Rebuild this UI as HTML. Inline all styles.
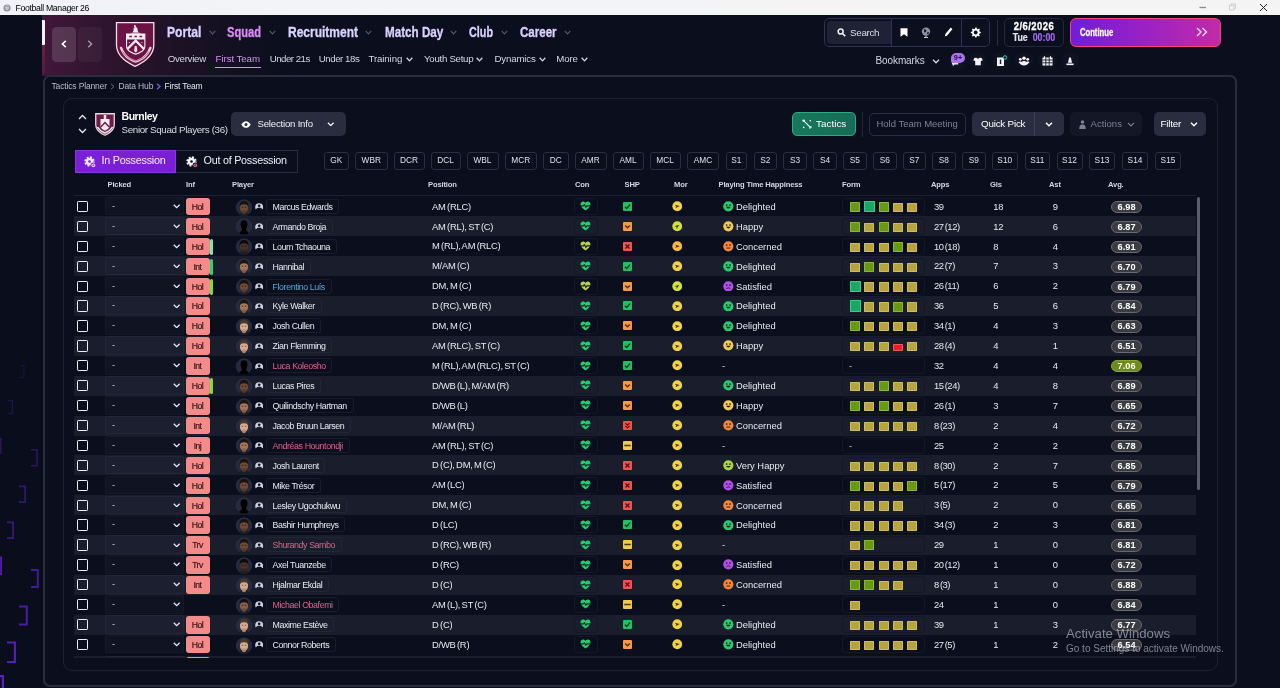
<!DOCTYPE html>
<html lang="en"><head><meta charset="utf-8"><title>Football Manager 26</title>
<style>
*{box-sizing:border-box;margin:0;padding:0}
html,body{width:1280px;height:688px;overflow:hidden;background:#0a0e1d;-webkit-font-smoothing:antialiased;font-family:"Liberation Sans",sans-serif;color:#e8e9ee}
.abs{position:absolute}
#wrap{position:absolute;left:0;top:0;width:1280px;height:688px;will-change:transform;transform:translateZ(0)}
#titlebar{position:absolute;left:0;top:0;width:1280px;height:15px;background:linear-gradient(90deg,#f0f2f7 0,#f3f4f7 400px,#f4f4f4 900px)}
#titlebar .t{position:absolute;left:15.5px;top:2.600px;font-size:8.7px;letter-spacing:-.32px;color:#000;line-height:11px}
#hdr{position:absolute;left:42px;top:15px;width:1238px;height:61px;background:linear-gradient(90deg,#41173a 0px,#341531 45px,#29132b 85px,#1a1125 150px,#0e0f1f 215px,#0a0e1d 260px)}
#sidebar{position:absolute;left:0;top:15px;width:42px;height:673px;background:#0a0d1b}
.navbtn{position:absolute;top:27px;width:23.5px;height:34.5px;border-radius:4.5px}
.mn{position:absolute;top:20.7px;font-weight:bold;font-size:15.4px;line-height:22px;transform-origin:0 50%;white-space:nowrap;-webkit-text-stroke:.35px currentColor}
.sn{position:absolute;top:52px;font-size:9.7px;line-height:14px;white-space:nowrap}
#panel{position:absolute;left:43px;top:74.7px;width:1194.2px;height:612.3px;border:2px solid #292d3e;border-radius:7px;background:#0a0e1d}
#inner{position:absolute;left:62.5px;top:98px;width:1155px;height:573px;border:1px solid #1d2132;border-radius:9px;background:#0a0e1d}
.bc{position:absolute;top:80px;font-size:8.5px;line-height:12px;color:#b9bccb;white-space:nowrap;letter-spacing:-.15px}
.btn{position:absolute;border-radius:5px;font-size:9.5px;white-space:nowrap}
.pbtn{position:absolute;top:152px;height:18px;border:1px solid #2a2e42;border-radius:3px;font-size:8.3px;line-height:15px;text-align:center;color:#dfe1ea}
.th{position:absolute;top:179px;font-size:7.6px;font-weight:bold;line-height:11px;color:#d4d6e0;white-space:nowrap;letter-spacing:-.15px}
#tbl{position:absolute;left:74px;top:0;width:1122px;height:657.5px;overflow:hidden}
.row{position:absolute;left:0;width:1122px;height:20px;font-size:9.4px;line-height:20px;white-space:nowrap}
.row.alt{background:#191d2c}
.row>*{position:absolute;margin-top:-.6px}
.cb{left:3px;top:5px;width:11.3px;height:11.3px;border:1.7px solid #eeeff4;border-radius:1.2px}
.pick{left:31px;top:1px;width:79px;height:18.5px;background:rgba(20,23,38,.55);border-radius:2px;border:1px solid rgba(255,255,255,.03)}
.row.alt .pick{background:rgba(30,34,50,.6)}
.pick>*{position:absolute}
.pd{left:6px;top:-2px;color:#c9ccd8}
.chev{left:67.2px;top:6.2px}
.inf{left:112px;top:2px;width:23.7px;height:17.5px;border-radius:3px;background:#f48b8b;color:#351616;font-size:8.6px;line-height:19px;text-align:center;letter-spacing:-.5px;text-indent:-.8px;-webkit-text-stroke:.2px #351616}
.ibar{left:135.8px;top:3px;width:3px;height:16px;border-radius:1.5px}
.av{left:161.6px;top:2.6px}
.pico{left:180.8px;top:7.4px}
.row.alt .pname{border-color:#222637}
.pname{left:192.3px;top:3px;height:15px;line-height:14px;padding:0 5.8px 0 5.3px;font-size:8.85px;letter-spacing:-.42px;border:1px solid #181c2c;border-radius:3px}
.pos{left:358px;top:.7px;color:#e8e9ee;letter-spacing:-.24px;word-spacing:-.9px}
.conbox{left:500px;top:2px;width:24px;height:17px;border:1px solid #13172a;border-radius:3px}
.conbox svg{position:absolute;left:4.8px;top:2.4px}
.shp{left:549px;top:6px;width:9px;height:9px;border-radius:1px}
.shp svg{position:absolute;left:0;top:0;width:9px;height:9px}
.mor{left:597.7px;top:5.3px}
.face{left:649px;top:5.2px}
.hap{left:662px;top:1px}
.formbox{left:768px;top:2px;width:83px;height:17px;border:1px solid #131728;border-radius:3px}
.formbox i{position:absolute;top:3.2px;width:10px;height:10px;border-radius:1px}
.formbox .dash{position:absolute;left:6px;top:-2px;color:#c9ccd8}
.apps{left:860px;top:.8px;letter-spacing:-.42px;word-spacing:-1.1px}.gls{left:919.3px;top:.8px;letter-spacing:-.25px}.ast{left:978.7px;top:.8px}
.avg{left:1037px;top:5px;height:12.3px;padding:0 5.6px;border-radius:7px;background:#3a3c42;border:1px solid #686a70;font-weight:bold;font-size:9.2px;line-height:10.3px;text-align:center;color:#fff;letter-spacing:.05px}
.avg.hi{background:#6d8a1e;border-color:#8aa832}
</style></head>
<body><div id="wrap">
<div id="titlebar"><span class="t">Football Manager 26</span>
<svg class="abs" style="left:2.500px;top:3.500px" width="8" height="8" viewBox="0 0 8 8"><circle cx="4" cy="4" r="3.600" fill="#8e8e9c"/><path d="M4 1.200 L5.800 3 L5 5.600 H3 L2.200 3 Z" fill="none" stroke="#e4e4ea" stroke-width=".7"/><circle cx="4" cy="3.800" r=".9" fill="#e9e9ee"/></svg>
<svg class="abs" style="left:1196px;top:0" width="84" height="15" viewBox="0 0 84 15"><path d="M3.500 7.500 H10" stroke="#8a8a8a" stroke-width="1.300"/><path d="M33.500 5.500 h4.500 v4.500 h-4.500 z M35 5.500 v-1.500 h4.500 v4.500 h-1.500" fill="none" stroke="#cfcfcf" stroke-width="1"/><path d="M64 4 L71 11 M71 4 L64 11" stroke="#222" stroke-width="1"/></svg>
</div>
<div id="sidebar"></div>
<div id="hdr"></div>
<div class="abs" style="left:42px;top:20px;width:3px;height:25px;background:#f4f0f6;border-radius:0 1px 1px 0"></div>
<div class="abs" style="left:42px;top:45px;width:3px;height:29px;background:linear-gradient(180deg,#6a2046,#561a3e)"></div>
<div class="navbtn" style="left:52px;background:rgba(255,255,255,.14)"><svg class="abs" style="left:9px;top:13px" width="6" height="8" viewBox="0 0 6 8"><path d="M4.800 .8 L1.400 4 L4.800 7.200" fill="none" stroke="#fff" stroke-width="1.600"/></svg></div>
<div class="navbtn" style="left:78px;background:rgba(255,255,255,.045)"><svg class="abs" style="left:8.500px;top:13px" width="6" height="8" viewBox="0 0 6 8"><path d="M1.200 .8 L4.600 4 L1.200 7.200" fill="none" stroke="#a898b2" stroke-width="1.400"/></svg></div>
<svg class="abs" style="left:108px;top:16px" width="56" height="56" viewBox="0 0 56 56">
<path d="M8.500 6.700 H45.800 V29 C45.800 39.500 36.500 46 27.150 50.300 C17.800 46 8.500 39.500 8.500 29 Z" fill="#6c1244" stroke="#f6dfe9" stroke-width="1.300"/>
<path d="M12 32.500 C11 30.800 13.800 30 14.500 32 C17 39 22 42.500 27.700 44.200 C33.400 42.500 38.400 39 40.900 32 C41.600 30 44.400 30.800 43.400 32.500 C40.500 40.500 34.500 44.800 27.700 46.800 C20.900 44.800 14.900 40.500 12 32.500 Z" fill="#e9cfdb"/>
<path d="M14.500 35.500 C17.500 40.500 22 43.300 27.700 45 C33.400 43.300 37.900 40.500 40.900 35.500" fill="none" stroke="#8a3c66" stroke-width=".7"/>
<path d="M18 17.500 H37.400 V30 C37.400 34.800 32.500 37.300 27.700 38.800 C22.900 37.300 18 34.800 18 30 Z" fill="#f7edf2"/>
<path d="M19.100 23.400 H36.300 V30 C36.300 33.900 32 36.200 27.700 37.500 C23.400 36.200 19.100 33.900 19.100 30 Z" fill="#6c1244"/>
<path d="M19.400 33 L27.700 24.600 L36 33" fill="none" stroke="#f7edf2" stroke-width="2.300"/>
<path d="M26.600 30.500 C27 29.500 28.400 29.500 28.800 30.500 L29.300 34.500 L28.300 36.300 H27.100 L26.100 34.500 Z" fill="#f0dbe5"/>
<path d="M21.300 20.500 h2.600 M26.500 20.500 h2.400 M31.500 20.500 h2.600" stroke="#6c1244" stroke-width="1.300"/>
<path d="M21.500 26.500 h.1 M33.900 26.500 h.1" stroke="#f0dbe5" stroke-width="1" stroke-linecap="round"/>
<path d="M26.400 9 C27.600 8.600 28.200 9.600 27.700 10.600 C29.300 11.800 30 13.300 29.600 14.800 L30.600 16.300 H24.600 L25.600 14.600 C25.200 13.300 25.600 12 26.600 11.200 C26 10.500 25.900 9.600 26.400 9 Z" fill="#f7edf2"/>
<path d="M22 17.500 C23.500 16 31.900 16 33.400 17.500 Z" fill="#f7edf2"/>
</svg>
<span class="mn" style="left:167.2px;color:#dad1ff;transform:scaleX(0.788)">Portal</span><svg class="abs" style="left:208.6px;top:29.8px" width="7" height="5" viewBox="0 0 7 5"><path d="M.7 .8 L3.5 3.9 L6.3 .8" fill="none" stroke="#59546c" stroke-width="1.2"/></svg><span class="mn" style="left:227.4px;color:#db8af8;transform:scaleX(0.723)">Squad</span><svg class="abs" style="left:269.3px;top:29.8px" width="7" height="5" viewBox="0 0 7 5"><path d="M.7 .8 L3.5 3.9 L6.3 .8" fill="none" stroke="#59546c" stroke-width="1.2"/></svg><span class="mn" style="left:288.0px;color:#dad1ff;transform:scaleX(0.779)">Recruitment</span><svg class="abs" style="left:365.4px;top:29.8px" width="7" height="5" viewBox="0 0 7 5"><path d="M.7 .8 L3.5 3.9 L6.3 .8" fill="none" stroke="#59546c" stroke-width="1.2"/></svg><span class="mn" style="left:384.5px;color:#dad1ff;transform:scaleX(0.758)">Match Day</span><svg class="abs" style="left:449.8px;top:29.8px" width="7" height="5" viewBox="0 0 7 5"><path d="M.7 .8 L3.5 3.9 L6.3 .8" fill="none" stroke="#59546c" stroke-width="1.2"/></svg><span class="mn" style="left:468.7px;color:#dad1ff;transform:scaleX(0.702)">Club</span><svg class="abs" style="left:500.5px;top:29.8px" width="7" height="5" viewBox="0 0 7 5"><path d="M.7 .8 L3.5 3.9 L6.3 .8" fill="none" stroke="#59546c" stroke-width="1.2"/></svg><span class="mn" style="left:519.7px;color:#dad1ff;transform:scaleX(0.750)">Career</span><svg class="abs" style="left:563.7px;top:29.8px" width="7" height="5" viewBox="0 0 7 5"><path d="M.7 .8 L3.5 3.9 L6.3 .8" fill="none" stroke="#59546c" stroke-width="1.2"/></svg><span class="sn" style="left:167.7px;color:#d5d7e4;letter-spacing:-0.27px">Overview</span><span class="sn" style="left:215.6px;color:#db8af8;letter-spacing:-0.07px">First Team</span><span class="sn" style="left:269.7px;color:#d5d7e4;letter-spacing:-0.51px">Under 21s</span><span class="sn" style="left:318.8px;color:#d5d7e4;letter-spacing:-0.46px">Under 18s</span><span class="sn" style="left:368.5px;color:#d5d7e4;letter-spacing:-0.12px">Training</span><svg class="abs" style="left:405.9px;top:57.4px" width="7" height="5" viewBox="0 0 7 5"><path d="M.7 .8 L3.5 3.9 L6.3 .8" fill="none" stroke="#d5d7e4" stroke-width="1.3"/></svg><span class="sn" style="left:424.0px;color:#d5d7e4;letter-spacing:-0.29px">Youth Setup</span><svg class="abs" style="left:476.4px;top:57.4px" width="7" height="5" viewBox="0 0 7 5"><path d="M.7 .8 L3.5 3.9 L6.3 .8" fill="none" stroke="#d5d7e4" stroke-width="1.3"/></svg><span class="sn" style="left:494.5px;color:#d5d7e4;letter-spacing:-0.17px">Dynamics</span><svg class="abs" style="left:538.6px;top:57.4px" width="7" height="5" viewBox="0 0 7 5"><path d="M.7 .8 L3.5 3.9 L6.3 .8" fill="none" stroke="#d5d7e4" stroke-width="1.3"/></svg><span class="sn" style="left:556.3px;color:#d5d7e4;letter-spacing:-0.15px">More</span><svg class="abs" style="left:581.3px;top:57.4px" width="7" height="5" viewBox="0 0 7 5"><path d="M.7 .8 L3.5 3.9 L6.3 .8" fill="none" stroke="#d5d7e4" stroke-width="1.3"/></svg>
<div class="abs" style="left:215px;top:66.600px;width:45.500px;height:1.200px;background:#db8af8"></div>
<!-- search group -->
<div class="abs" style="left:824px;top:18px;width:166px;height:29px;border:1.800px solid #332e5a;border-radius:5px;background:#0c0f1e"></div>
<div class="abs" style="left:827px;top:21px;width:64px;height:23px;border-radius:4px 0 0 4px;background:#1f2235"></div>
<svg class="abs" style="left:837px;top:28px" width="9" height="9" viewBox="0 0 9 9"><circle cx="3.600" cy="3.600" r="2.500" fill="none" stroke="#f0f0f5" stroke-width="1.500"/><path d="M5.500 5.500 L8.200 8.200" stroke="#f0f0f5" stroke-width="1.700"/></svg>
<span class="abs" style="left:850px;top:27px;font-size:9.800px;line-height:12px;color:#dcdde6;letter-spacing:-.3px">Search</span>
<div class="abs" style="left:891px;top:19px;width:1.200px;height:27px;background:#332e5a"></div>
<div class="abs" style="left:961px;top:19px;width:1.200px;height:27px;background:#332e5a"></div>
<svg class="abs" style="left:900px;top:28px" width="8" height="9" viewBox="0 0 8 9"><path d="M.5 .3 H7.500 V8.700 L4 6.300 L.5 8.700 Z" fill="#fff"/></svg>
<svg class="abs" style="left:921px;top:27px" width="10" height="11" viewBox="0 0 10 11"><circle cx="5" cy="4.600" r="4.200" fill="#8f92a3"/><path d="M3 2 L5.500 3 L5 5 L3 5.500 Z M6 5.500 L8 5 L7.500 7.500 L6 7 Z" fill="#1a1d2c"/><path d="M5 8.800 V10.500 M3 10.500 H7" stroke="#c8c9d4" stroke-width="1"/></svg>
<svg class="abs" style="left:944px;top:27px" width="9" height="10" viewBox="0 0 9 10"><path d="M6.800 .6 L8.400 2.200 L3.200 8.400 L.8 9.400 L1.500 6.800 Z" fill="#fff"/></svg>
<svg class="abs" style="left:970px;top:27px" width="11" height="11" viewBox="0 0 11 11"><path d="M5.500 .3 L6.500 .4 L6.900 1.800 L7.800 2.200 L9.100 1.500 L9.900 2.400 L9.200 3.700 L9.500 4.600 L10.800 5 L10.800 6.100 L9.500 6.500 L9.100 7.400 L9.800 8.700 L9 9.500 L7.700 8.800 L6.800 9.200 L6.400 10.600 L5.300 10.600 L4.900 9.200 L4 8.800 L2.700 9.500 L1.900 8.700 L2.600 7.400 L2.200 6.500 L.8 6.100 L.8 5 L2.200 4.600 L2.600 3.700 L1.900 2.400 L2.700 1.600 L4 2.300 L4.900 1.900 Z" fill="#fff"/><circle cx="5.700" cy="5.500" r="1.900" fill="#0d1020"/></svg>
<div class="abs" style="left:996.500px;top:20px;width:1.500px;height:26px;background:#2a2d3f"></div>
<!-- date -->
<div class="abs" style="left:1004px;top:18px;width:60px;height:29px;border:1.800px solid #25283a;border-radius:5px"></div>
<span class="abs" style="left:1004px;top:19.500px;width:60px;text-align:center;font-weight:bold;font-size:10.500px;line-height:13px;color:#fff;transform:scaleX(.9);letter-spacing:.5px;-webkit-text-stroke:.3px #fff">2/6/2026</span>
<span class="abs" style="left:1004px;top:31px;width:60px;text-align:center;font-weight:bold;font-size:10.500px;line-height:13px;color:#e4e4ee;transform:scaleX(.84);white-space:pre;-webkit-text-stroke:.2px currentColor">Tue  <span style="color:#a26bf2">00:00</span></span>
<!-- continue -->
<div class="abs" style="left:1070px;top:18px;width:151px;height:29px;border:1.500px solid #f2447c;border-radius:6px;background:linear-gradient(90deg,#6f1ddc 0%,#9a22c4 50%,#c42aa8 100%)"></div>
<span class="abs" style="left:1080px;top:25px;font-weight:bold;font-size:11.500px;line-height:14px;color:#fff;transform-origin:0 50%;transform:scaleX(.665);-webkit-text-stroke:.3px #fff">Continue</span>
<svg class="abs" style="left:1196px;top:27px" width="12" height="10" viewBox="0 0 12 10"><path d="M1 1 L5 5 L1 9 M6.500 1 L10.500 5 L6.500 9" fill="none" stroke="#f4dff4" stroke-width="1.400"/></svg>
<!-- bookmarks row -->
<span class="abs" style="left:875.500px;top:54px;font-size:10px;line-height:13px;color:#d5d7e4;letter-spacing:-.1px">Bookmarks</span>
<svg class="abs" style="left:932px;top:58.500px" width="8" height="5" viewBox="0 0 8 5"><path d="M1 .8 L4 3.800 L7 .8" fill="none" stroke="#d5d7e4" stroke-width="1.300"/></svg>
<div class="abs" style="left:949px;top:52px;width:18px;height:18px;border-radius:9px;background:#0f1221"></div>
<div class="abs" style="left:969px;top:52px;width:18px;height:18px;border-radius:9px;background:#0f1221"></div>
<div class="abs" style="left:992px;top:52px;width:18px;height:18px;border-radius:9px;background:#0f1221"></div>
<div class="abs" style="left:1015px;top:52px;width:18px;height:18px;border-radius:9px;background:#0f1221"></div>
<div class="abs" style="left:1038px;top:52px;width:18px;height:18px;border-radius:9px;background:#0f1221"></div>
<div class="abs" style="left:1061px;top:52px;width:18px;height:18px;border-radius:9px;background:#0f1221"></div>
<svg class="abs" style="left:950.500px;top:58.500px" width="10" height="9" viewBox="0 0 11 10"><path d="M1 1 H8 V6 H4 L2 8 V6 H1 Z" fill="#e9e9f2"/></svg>
<div class="abs" style="left:951px;top:52.800px;width:14px;height:10px;border-radius:5px 5px 5px 2px;background:#a874ee"></div>
<span class="abs" style="left:951px;top:52.800px;width:14px;text-align:center;font-size:7.300px;font-weight:bold;line-height:10px;color:#2a0c52">9+</span>
<svg class="abs" style="left:973.200px;top:56.800px" width="10" height="8.800" viewBox="0 0 11 10"><path d="M3.500 .5 L1 1.500 L.2 4 L2.300 4.600 V9.500 H8.700 V4.600 L10.800 4 L10 1.500 L7.500 .5 C7 2 4 2 3.500 .5 Z" fill="#f2f2f7"/></svg>
<svg class="abs" style="left:996px;top:54.500px" width="12" height="12" viewBox="0 0 12 12"><path d="M1 2.500 H8 V11 H1 Z" fill="#f2f2f7"/><path d="M4.500 4.500 V9" stroke="#171a2a" stroke-width="1.400"/><circle cx="9" cy="2.500" r="1.800" fill="#171a2a" stroke="#27c2b0" stroke-width="1"/></svg>
<svg class="abs" style="left:1018px;top:56px" width="12" height="10" viewBox="0 0 12 10"><circle cx="6" cy="2.300" r="1.800" fill="#f2f2f7"/><circle cx="2.300" cy="3.300" r="1.400" fill="#f2f2f7"/><circle cx="9.700" cy="3.300" r="1.400" fill="#f2f2f7"/><path d="M.5 6 C2 8.500 4 9.500 6 9.500 C8 9.500 10 8.500 11.500 6 L9.500 5.200 C8.500 6.500 7 5 6 5 C5 5 3.500 6.500 2.500 5.200 Z" fill="#f2f2f7"/></svg>
<svg class="abs" style="left:1042px;top:56px" width="11" height="10" viewBox="0 0 11 10"><path d="M.5 1.500 H10.500 V9.500 H.5 Z" fill="#f2f2f7"/><path d="M.5 4 H10.500 M.5 6.800 H10.500 M3.800 1.500 V9.500 M7.200 1.500 V9.500" stroke="#171a2a" stroke-width=".9"/><path d="M2.500 .3 V2.200 M8.500 .3 V2.200" stroke="#f2f2f7" stroke-width="1.200"/></svg>
<svg class="abs" style="left:1066px;top:56.500px" width="8" height="9" viewBox="0 0 10 11"><path d="M4 .5 H6 L7.600 7 H2.400 Z" fill="#f2f2f7"/><path d="M.5 8 H9.500 V10 H.5 Z" fill="#f2f2f7"/></svg>

<div id="panel"></div>
<div id="inner"></div>
<!-- breadcrumb -->
<span class="bc" style="left:51.500px">Tactics Planner</span>
<svg class="abs" style="left:110px;top:83px" width="5" height="7" viewBox="0 0 5 7"><path d="M1 .8 L4 3.500 L1 6.200" fill="none" stroke="#6a6e82" stroke-width="1"/></svg>
<span class="bc" style="left:118.500px">Data Hub</span>
<svg class="abs" style="left:156px;top:83px" width="5" height="7" viewBox="0 0 5 7"><path d="M1 .8 L4 3.500 L1 6.200" fill="none" stroke="#8a55e8" stroke-width="1.300"/></svg>
<span class="bc" style="left:164.500px;color:#e6e7ee">First Team</span>
<!-- team heading -->
<svg class="abs" style="left:78px;top:114px" width="9" height="6" viewBox="0 0 9 6"><path d="M1 5 L4.500 1.500 L8 5" fill="none" stroke="#e8e9ee" stroke-width="1.300"/></svg>
<svg class="abs" style="left:78px;top:127.500px" width="9" height="6" viewBox="0 0 9 6"><path d="M1 1 L4.500 4.500 L8 1" fill="none" stroke="#e8e9ee" stroke-width="1.300"/></svg>
<svg class="abs" style="left:95px;top:112.500px" width="20" height="23" viewBox="0 0 40 46">
<path d="M1.500 1.500 H38.500 V24 C38.500 33 30 40 20 44.500 C10 40 1.500 33 1.500 24 Z" fill="#6c1d45" stroke="#e9d9e1" stroke-width="2.600"/>
<path d="M11 12 H29 V26 C29 30 25 33.500 20 35.500 C15 33.500 11 30 11 26 Z" fill="#f3e9ee"/>
<path d="M11.500 28 L20 19 L28.500 28" fill="none" stroke="#6c1d45" stroke-width="3"/>
<path d="M17.500 4 h5 v8 h-5 z" fill="#f3e9ee"/>
<path d="M5 28 C9 35 14 38 20 40 C26 38 31 35 35 28" fill="none" stroke="#f3e9ee" stroke-width="3"/>
</svg>
<span class="abs" style="left:121.500px;top:109.800px;font-size:10.500px;font-weight:bold;line-height:13px;color:#fff;letter-spacing:-.45px">Burnley</span>
<span class="abs" style="left:121.500px;top:122.800px;font-size:9.800px;line-height:13px;color:#dcdde6;letter-spacing:-.35px;white-space:nowrap">Senior Squad Players (36)</span>
<div class="btn" style="left:230.500px;top:112px;width:115.500px;height:24px;background:#2a2d40"></div>
<svg class="abs" style="left:241px;top:121px" width="10" height="7" viewBox="0 0 10 7"><path d="M.3 3.500 C2 .8 3.500 .2 5 .2 C6.500 .2 8 .8 9.700 3.500 C8 6.200 6.500 6.800 5 6.800 C3.500 6.800 2 6.200 .3 3.500 Z" fill="#fff"/><circle cx="5" cy="3.500" r="1.500" fill="#2a2d40"/></svg>
<span class="abs" style="left:257.500px;top:118px;font-size:9.600px;line-height:12px;color:#eeeef4;letter-spacing:-.2px;white-space:nowrap">Selection Info</span>
<svg class="abs" style="left:327px;top:121.700px" width="7.500" height="4.700" viewBox="0 0 8 5"><path d="M1 .8 L4 3.800 L7 .8" fill="none" stroke="#fff" stroke-width="1.300"/></svg>
<!-- right toolbar -->
<div class="btn" style="left:792px;top:112px;width:64px;height:24px;background:linear-gradient(90deg,#15795b,#176c56);border:1px solid #2dab80"></div>
<svg class="abs" style="left:802px;top:119px" width="10" height="10" viewBox="0 0 10 10"><path d="M1.800 1.800 L8.600 8.600" stroke="#fff" stroke-width="1.100"/><circle cx="1.600" cy="1.600" r="1.200" fill="#fff"/><circle cx="8.300" cy="1.700" r=".8" fill="#e8fff6"/><circle cx="1.700" cy="8.300" r=".9" fill="#e8fff6"/><path d="M7 9 L9 9 L9 7" fill="none" stroke="#fff" stroke-width=".9"/></svg>
<span class="abs" style="left:816px;top:118px;font-size:9.800px;line-height:12px;color:#fff;letter-spacing:.05px">Tactics</span>
<div class="abs" style="left:862px;top:112px;width:1px;height:25px;background:#23273a"></div>
<div class="btn" style="left:869px;top:112.500px;width:97px;height:23.500px;border:1px solid #2a2e42"></div>
<span class="abs" style="left:876.500px;top:118px;font-size:9.500px;line-height:12px;color:#7d8194;letter-spacing:-.02px;white-space:nowrap">Hold Team Meeting</span>
<div class="btn" style="left:972px;top:112px;width:91.500px;height:24px;background:#2a2d40"></div>
<div class="abs" style="left:1033.500px;top:112px;width:1px;height:24px;background:#3d4056"></div>
<span class="abs" style="left:981px;top:118px;font-size:9.800px;line-height:12px;color:#fff;letter-spacing:-.2px;white-space:nowrap">Quick Pick</span>
<svg class="abs" style="left:1044.500px;top:122px" width="8" height="5" viewBox="0 0 8 5"><path d="M1 .8 L4 3.800 L7 .8" fill="none" stroke="#fff" stroke-width="1.400"/></svg>
<div class="btn" style="left:1070px;top:112px;width:72px;height:24px;background:#141726"></div>
<svg class="abs" style="left:1078.500px;top:119.500px" width="7" height="9" viewBox="0 0 7 9"><circle cx="3.500" cy="2" r="1.800" fill="#7d8194"/><path d="M.3 9 C.3 5.500 1.500 4.500 3.500 4.500 C5.500 4.500 6.700 5.500 6.700 9 Z" fill="#7d8194"/></svg>
<span class="abs" style="left:1090.500px;top:118px;font-size:9.500px;line-height:12px;color:#7d8194;letter-spacing:.05px">Actions</span>
<svg class="abs" style="left:1126.500px;top:122px" width="8" height="5" viewBox="0 0 8 5"><path d="M1 .8 L4 3.800 L7 .8" fill="none" stroke="#7d8194" stroke-width="1.200"/></svg>
<div class="btn" style="left:1154px;top:112px;width:52px;height:24px;background:#2a2d40"></div>
<span class="abs" style="left:1160.500px;top:118px;font-size:9.800px;line-height:12px;color:#fff;letter-spacing:-.2px">Filter</span>
<svg class="abs" style="left:1190px;top:122px" width="8" height="5" viewBox="0 0 8 5"><path d="M1 .8 L4 3.800 L7 .8" fill="none" stroke="#fff" stroke-width="1.400"/></svg>
<!-- possession tabs -->
<div class="abs" style="left:74.500px;top:150px;width:101px;height:23px;background:#7a1fd6;border:1px solid #8c35e6"></div>
<div class="abs" style="left:175.500px;top:150px;width:122px;height:23px;border:1px solid #2a2e42;border-left:none"></div>
<svg class="abs" style="left:83.500px;top:155.500px" width="12.500" height="12.500" viewBox="0 0 12.500 12.500"><circle cx="5.500" cy="5.500" r="4.300" fill="none" stroke="#f2e9fb" stroke-width="1.800" stroke-dasharray="1.900 1.480"/><circle cx="5.500" cy="5.500" r="3.700" fill="#f2e9fb"/><circle cx="5.500" cy="5.500" r="1.300" fill="#7a1fd6"/><circle cx="9.300" cy="9.300" r="2.700" fill="#7a1fd6"/><circle cx="9.300" cy="9.300" r="1.900" fill="#e9dcf8"/><path d="M8.300 9.300 h2 M9.300 8.300 v2" stroke="#7a1fd6" stroke-width=".6"/></svg>
<span class="abs" style="left:101.500px;top:153px;font-size:10.800px;line-height:14px;color:#f4ecfc;letter-spacing:-.25px;white-space:nowrap">In Possession</span>
<svg class="abs" style="left:185.500px;top:155.500px" width="12.500" height="12.500" viewBox="0 0 12.500 12.500"><circle cx="5.500" cy="5.500" r="4.300" fill="none" stroke="#f2f2f7" stroke-width="1.800" stroke-dasharray="1.900 1.480"/><circle cx="5.500" cy="5.500" r="3.700" fill="#f2f2f7"/><circle cx="5.500" cy="5.500" r="1.300" fill="#0a0e1d"/><circle cx="9.300" cy="9.300" r="2.700" fill="#0a0e1d"/><circle cx="9.300" cy="9.300" r="1.900" fill="#e4707e"/><path d="M8.300 9.300 h2 M9.300 8.300 v2" stroke="#0a0e1d" stroke-width=".6"/></svg>
<span class="abs" style="left:203.500px;top:153px;font-size:10.800px;line-height:14px;color:#eeeef4;letter-spacing:-.25px;white-space:nowrap">Out of Possession</span>
<!-- position buttons -->
<span class="pbtn" style="left:323.500px;width:25.500px">GK</span>
<span class="pbtn" style="left:355px;width:32.500px">WBR</span>
<span class="pbtn" style="left:393.500px;width:31px">DCR</span>
<span class="pbtn" style="left:430.500px;width:30px">DCL</span>
<span class="pbtn" style="left:466.500px;width:32px">WBL</span>
<span class="pbtn" style="left:504.500px;width:32.500px">MCR</span>
<span class="pbtn" style="left:543px;width:25.500px">DC</span>
<span class="pbtn" style="left:574.500px;width:32px">AMR</span>
<span class="pbtn" style="left:612.500px;width:31px">AML</span>
<span class="pbtn" style="left:649.500px;width:31px">MCL</span>
<span class="pbtn" style="left:687px;width:32px">AMC</span>
<span class="pbtn" style="left:725.500px;width:21.500px">S1</span>
<span class="pbtn" style="left:753.500px;width:23.500px">S2</span>
<span class="pbtn" style="left:783px;width:24px">S3</span>
<span class="pbtn" style="left:813px;width:24px">S4</span>
<span class="pbtn" style="left:843px;width:23.500px">S5</span>
<span class="pbtn" style="left:873px;width:23.500px">S6</span>
<span class="pbtn" style="left:902.500px;width:23.500px">S7</span>
<span class="pbtn" style="left:932px;width:23.500px">S8</span>
<span class="pbtn" style="left:962px;width:23.500px">S9</span>
<span class="pbtn" style="left:991.500px;width:26.500px">S10</span>
<span class="pbtn" style="left:1025px;width:24.500px">S11</span>
<span class="pbtn" style="left:1056.500px;width:26px">S12</span>
<span class="pbtn" style="left:1089px;width:26px">S13</span>
<span class="pbtn" style="left:1122px;width:26px">S14</span>
<span class="pbtn" style="left:1155px;width:26px">S15</span>
<!-- table header -->
<span class="th" style="left:107.500px">Picked</span>
<span class="th" style="left:186px">Inf</span>
<span class="th" style="left:232px">Player</span>
<span class="th" style="left:428px">Position</span>
<span class="th" style="left:575px">Con</span>
<span class="th" style="left:624.500px">SHP</span>
<span class="th" style="left:674px">Mor</span>
<span class="th" style="left:718.500px">Playing Time Happiness</span>
<span class="th" style="left:842px">Form</span>
<span class="th" style="left:931px">Apps</span>
<span class="th" style="left:990px">Gls</span>
<span class="th" style="left:1049px">Ast</span>
<span class="th" style="left:1108px">Avg.</span>
<div class="abs" style="left:74px;top:195px;width:1122px;height:1px;background:#1c2031"></div>
<div class="abs" style="left:1197px;top:197px;width:3px;height:293px;border-radius:1.500px;background:#5a5d6c"></div>

<div id="tbl">
<div class="row" style="top:196.50px"><span class="cb"></span><span class="pick"><span class="pd">-</span><svg class="chev" viewBox="0 0 8 5" width="7.4" height="4.6"><path d="M0.8 0.8 L4 4 L7.2 0.8" fill="none" stroke="#e8e9ee" stroke-width="1.4"/></svg></span><span class="inf">Hol</span><svg class="av" viewBox="0 0 16 17" width="16" height="17"><circle cx="8" cy="8.5" r="7.8" fill="#252a3f" stroke="#343a52" stroke-width=".5"/><path d="M3.2 16 C3.6 14.2 5.4 13.6 8 13.6 C10.6 13.6 12.4 14.2 12.8 16 C11.500 16.700 9.800 17 8 17 C6.200 17 4.500 16.700 3.200 16 Z" fill="#1b1d26"/><path d="M6.200 11 H9.800 V14.600 C9 15.400 7 15.400 6.200 14.600 Z" fill="#4e3224"/><ellipse cx="8" cy="8.800" rx="4.100" ry="5.200" fill="#6f4a35"/><path d="M4.300 10.500 C5 13 6.500 14 8 14 C9.500 14 11 13 11.700 10.500 C10.800 12 9.500 12.600 8 12.600 C6.500 12.600 5.200 12 4.300 10.500 Z" fill="#4e3224"/><path d="M3.700 8 C3.300 3.600 5.400 2 8 2 C10.600 2 12.700 3.600 12.300 8 C11.800 5.800 10.600 5.200 8 5.200 C5.400 5.200 4.200 5.800 3.700 8 Z" fill="#17100c"/><path d="M5.700 8.300 h1.500 M8.800 8.300 h1.500" stroke="#17100c" stroke-width=".7"/><path d="M6.800 11.400 Q8 12.100 9.200 11.400" fill="none" stroke="#4e3224" stroke-width=".6"/></svg><svg class="pico" viewBox="0 0 10 8" width="8.400" height="6.700"><path d="M5 .2 A4.800 4.800 0 0 1 9.800 5 C9.800 6.200 9.500 7 9 7.800 C8.400 6.300 7 5.600 5 5.600 C3 5.600 1.600 6.300 1 7.800 C.5 7 .2 6.200 .2 5 A4.800 4.800 0 0 1 5 .2 Z" fill="#cdd0e2"/><circle cx="5" cy="3.400" r="1.600" fill="#141828"/></svg><span class="pname" style="color:#e8e9ee">Marcus Edwards</span><span class="pos">AM (RLC)</span><span class="conbox"><svg viewBox="0 0 14 13" width="11" height="10.2"><path d="M7 12 C3.2 9.2 0.7 6.8 0.7 4 C0.7 2 2.2 0.7 3.9 0.7 C5.2 0.7 6.3 1.4 7 2.5 C7.7 1.4 8.8 0.7 10.1 0.7 C11.8 0.7 13.3 2 13.3 4 C13.3 6.8 10.8 9.2 7 12 Z" fill="#1fd071"/><path d="M1.2 6.2 L4.4 6.2 L5.6 4.6 L7.4 8 L8.8 6.2 L12.8 6.2" fill="none" stroke="#0f2a22" stroke-width="1.5" stroke-linejoin="round"/></svg></span><span class="shp" style="background:#1fc163"><svg viewBox="0 0 10 10"><path d="M2.2 5.3 L4.2 7.2 L7.8 2.9" fill="none" stroke="#0d3a22" stroke-width="1.6"/></svg></span><svg class="mor" viewBox="0 0 12 12" width="10.5" height="10.5"><circle cx="6" cy="6" r="5.6" fill="#efd545"/><path d="M3.500 3.900 L8.900 6 L3.500 8.100 L4.900 6 Z" fill="#4b3208" transform="rotate(-8 6 6)"/></svg><svg class="face" viewBox="0 0 12 12" width="10.7" height="10.7"><circle cx="6" cy="6" r="5.7" fill="#2acb72"/><circle cx="4.100" cy="4.500" r=".95" fill="#2a1a08"/><circle cx="7.900" cy="4.500" r=".95" fill="#2a1a08"/><path d="M3.2 6.4 Q6 10.6 8.8 6.4 Z" fill="#2a1a08"/></svg><span class="hap">Delighted</span><span class="formbox"><i style="left:7.0px;top:3.1px;width:10.2px;height:10.0px;background:#679a12;box-shadow:inset 0 0 0 1px #8db63a"></i><i style="left:20.6px;top:2.0px;width:11.2px;height:11.1px;background:#18a862;box-shadow:inset 0 0 0 1px #42c98c"></i><i style="left:35.7px;top:3.1px;width:10.2px;height:10.0px;background:#679a12;box-shadow:inset 0 0 0 1px #8db63a"></i><i style="left:49.7px;top:3.9px;width:10.2px;height:9.2px;background:#b8a43c;box-shadow:inset 0 0 0 1px #cbbd62"></i><i style="left:63.6px;top:3.9px;width:10.2px;height:9.2px;background:#b8a43c;box-shadow:inset 0 0 0 1px #cbbd62"></i></span><span class="apps">39</span><span class="gls">18</span><span class="ast">9</span><span class="avg ">6.98</span></div>
<div class="row alt" style="top:216.41px"><span class="cb"></span><span class="pick"><span class="pd">-</span><svg class="chev" viewBox="0 0 8 5" width="7.4" height="4.6"><path d="M0.8 0.8 L4 4 L7.2 0.8" fill="none" stroke="#e8e9ee" stroke-width="1.4"/></svg></span><span class="inf">Hol</span><svg class="av" viewBox="0 0 16 17" width="16" height="17"><circle cx="8" cy="8.5" r="7.8" fill="#252a3f" stroke="#343a52" stroke-width=".5"/><path d="M8 2.2 C10.6 2.2 11.6 4.2 11.4 6.6 C11.2 9 10.4 10.6 10 11.6 C10.2 12.8 11.4 13.6 12.8 14.4 L11 16.6 L5 16.6 L3.2 14.4 C4.600 13.6 5.800 12.800 6 11.600 C5.600 10.600 4.800 9 4.600 6.600 C4.400 4.200 5.400 2.200 8 2.200 Z" fill="#020203"/></svg><svg class="pico" viewBox="0 0 10 8" width="8.400" height="6.700"><path d="M5 .2 A4.800 4.800 0 0 1 9.800 5 C9.800 6.200 9.500 7 9 7.800 C8.400 6.300 7 5.600 5 5.600 C3 5.600 1.600 6.300 1 7.800 C.5 7 .2 6.200 .2 5 A4.800 4.800 0 0 1 5 .2 Z" fill="#cdd0e2"/><circle cx="5" cy="3.400" r="1.600" fill="#141828"/></svg><span class="pname" style="color:#e8e9ee">Armando Broja</span><span class="pos">AM (RL), ST (C)</span><span class="conbox"><svg viewBox="0 0 14 13" width="11" height="10.2"><path d="M7 12 C3.2 9.2 0.7 6.8 0.7 4 C0.7 2 2.2 0.7 3.9 0.7 C5.2 0.7 6.3 1.4 7 2.5 C7.7 1.4 8.8 0.7 10.1 0.7 C11.8 0.7 13.3 2 13.3 4 C13.3 6.8 10.8 9.2 7 12 Z" fill="#1fd071"/><path d="M1.2 6.2 L4.4 6.2 L5.6 4.6 L7.4 8 L8.8 6.2 L12.8 6.2" fill="none" stroke="#0f2a22" stroke-width="1.5" stroke-linejoin="round"/></svg></span><span class="shp" style="background:#f79a45"><svg viewBox="0 0 10 10"><path d="M2.4 3.8 L5 6.3 L7.6 3.8" fill="none" stroke="#5a2c08" stroke-width="1.6"/></svg></span><svg class="mor" viewBox="0 0 12 12" width="10.5" height="10.5"><circle cx="6" cy="6" r="5.6" fill="#d2e23a"/><path d="M3.500 3.900 L8.900 6 L3.500 8.100 L4.900 6 Z" fill="#4b3208" transform="rotate(-38 6 6)"/></svg><svg class="face" viewBox="0 0 12 12" width="10.7" height="10.7"><circle cx="6" cy="6" r="5.7" fill="#f2cc55"/><circle cx="4.100" cy="4.500" r=".95" fill="#2a1a08"/><circle cx="7.900" cy="4.500" r=".95" fill="#2a1a08"/><path d="M3.3 6.500 Q6 10.400 8.700 6.500 Z" fill="#2a1a08"/></svg><span class="hap">Happy</span><span class="formbox"><i style="left:7.0px;top:3.1px;width:10.2px;height:10.0px;background:#679a12;box-shadow:inset 0 0 0 1px #8db63a"></i><i style="left:21.1px;top:3.9px;width:10.2px;height:9.2px;background:#b8a43c;box-shadow:inset 0 0 0 1px #cbbd62"></i><i style="left:35.7px;top:3.1px;width:10.2px;height:10.0px;background:#679a12;box-shadow:inset 0 0 0 1px #8db63a"></i><i style="left:49.7px;top:3.9px;width:10.2px;height:9.2px;background:#b8a43c;box-shadow:inset 0 0 0 1px #cbbd62"></i><i style="left:63.6px;top:3.9px;width:10.2px;height:9.2px;background:#b8a43c;box-shadow:inset 0 0 0 1px #cbbd62"></i></span><span class="apps">27 (12)</span><span class="gls">12</span><span class="ast">6</span><span class="avg ">6.87</span></div>
<div class="row" style="top:236.32px"><span class="cb"></span><span class="pick"><span class="pd">-</span><svg class="chev" viewBox="0 0 8 5" width="7.4" height="4.6"><path d="M0.8 0.8 L4 4 L7.2 0.8" fill="none" stroke="#e8e9ee" stroke-width="1.4"/></svg></span><span class="inf">Hol</span><span class="ibar" style="background:#7be6b0"></span><svg class="av" viewBox="0 0 16 17" width="16" height="17"><circle cx="8" cy="8.5" r="7.8" fill="#252a3f" stroke="#343a52" stroke-width=".5"/><path d="M3.2 16 C3.6 14.2 5.4 13.6 8 13.6 C10.6 13.6 12.4 14.2 12.8 16 C11.500 16.700 9.800 17 8 17 C6.200 17 4.500 16.700 3.200 16 Z" fill="#1b1d26"/><path d="M6.200 11 H9.800 V14.600 C9 15.400 7 15.400 6.200 14.600 Z" fill="#2e1e17"/><ellipse cx="8" cy="8.800" rx="4.100" ry="5.200" fill="#4a3226"/><path d="M4.300 10.500 C5 13 6.500 14 8 14 C9.500 14 11 13 11.700 10.500 C10.800 12 9.500 12.600 8 12.600 C6.500 12.600 5.200 12 4.300 10.500 Z" fill="#2e1e17"/><path d="M3.700 8 C3.300 3.600 5.400 2 8 2 C10.600 2 12.700 3.600 12.300 8 C11.800 5.800 10.600 5.200 8 5.200 C5.400 5.200 4.200 5.800 3.700 8 Z" fill="#0d0a08"/><path d="M5.700 8.300 h1.500 M8.800 8.300 h1.500" stroke="#0d0a08" stroke-width=".7"/><path d="M6.800 11.400 Q8 12.100 9.200 11.400" fill="none" stroke="#2e1e17" stroke-width=".6"/></svg><svg class="pico" viewBox="0 0 10 8" width="8.400" height="6.700"><path d="M5 .2 A4.800 4.800 0 0 1 9.800 5 C9.800 6.200 9.500 7 9 7.800 C8.400 6.300 7 5.600 5 5.600 C3 5.600 1.600 6.300 1 7.800 C.5 7 .2 6.200 .2 5 A4.800 4.800 0 0 1 5 .2 Z" fill="#cdd0e2"/><circle cx="5" cy="3.400" r="1.600" fill="#141828"/></svg><span class="pname" style="color:#e8e9ee">Loum Tchaouna</span><span class="pos">M (RL), AM (RLC)</span><span class="conbox"><svg viewBox="0 0 14 13" width="11" height="10.2"><path d="M7 12 C3.2 9.2 0.7 6.8 0.7 4 C0.7 2 2.2 0.7 3.9 0.7 C5.2 0.7 6.3 1.4 7 2.5 C7.7 1.4 8.8 0.7 10.1 0.7 C11.8 0.7 13.3 2 13.3 4 C13.3 6.8 10.8 9.2 7 12 Z" fill="#b9d145"/><path d="M1.2 6.2 L4.4 6.2 L5.6 4.6 L7.4 8 L8.8 6.2 L12.8 6.2" fill="none" stroke="#0f2a22" stroke-width="1.5" stroke-linejoin="round"/></svg></span><span class="shp" style="background:#ec5552"><svg viewBox="0 0 10 10"><path d="M2.8 2.8 L7.2 7.2 M7.2 2.8 L2.8 7.2" fill="none" stroke="#5c1016" stroke-width="1.5"/></svg></span><svg class="mor" viewBox="0 0 12 12" width="10.5" height="10.5"><circle cx="6" cy="6" r="5.6" fill="#f6bb45"/><path d="M3.500 3.900 L8.900 6 L3.500 8.100 L4.900 6 Z" fill="#4b3208" transform="rotate(0 6 6)"/></svg><svg class="face" viewBox="0 0 12 12" width="10.7" height="10.7"><circle cx="6" cy="6" r="5.7" fill="#f5863d"/><circle cx="4.100" cy="4.500" r=".95" fill="#2a1a08"/><circle cx="7.900" cy="4.500" r=".95" fill="#2a1a08"/><path d="M3.9 7.9 L8.1 7.9" fill="none" stroke="#2a1a08" stroke-width="1"/></svg><span class="hap">Concerned</span><span class="formbox"><i style="left:7.0px;top:3.9px;width:10.2px;height:9.2px;background:#b8a43c;box-shadow:inset 0 0 0 1px #cbbd62"></i><i style="left:21.1px;top:3.9px;width:10.2px;height:9.2px;background:#b8a43c;box-shadow:inset 0 0 0 1px #cbbd62"></i><i style="left:35.7px;top:3.9px;width:10.2px;height:9.2px;background:#b8a43c;box-shadow:inset 0 0 0 1px #cbbd62"></i><i style="left:49.7px;top:3.1px;width:10.2px;height:10.0px;background:#679a12;box-shadow:inset 0 0 0 1px #8db63a"></i><i style="left:63.6px;top:3.9px;width:10.2px;height:9.2px;background:#b8a43c;box-shadow:inset 0 0 0 1px #cbbd62"></i></span><span class="apps">10 (18)</span><span class="gls">8</span><span class="ast">4</span><span class="avg ">6.91</span></div>
<div class="row alt" style="top:256.23px"><span class="cb"></span><span class="pick"><span class="pd">-</span><svg class="chev" viewBox="0 0 8 5" width="7.4" height="4.6"><path d="M0.8 0.8 L4 4 L7.2 0.8" fill="none" stroke="#e8e9ee" stroke-width="1.4"/></svg></span><span class="inf">Int</span><span class="ibar" style="background:#2fd36b"></span><svg class="av" viewBox="0 0 16 17" width="16" height="17"><circle cx="8" cy="8.5" r="7.8" fill="#252a3f" stroke="#343a52" stroke-width=".5"/><path d="M3.2 16 C3.6 14.2 5.4 13.6 8 13.6 C10.6 13.6 12.4 14.2 12.8 16 C11.500 16.700 9.800 17 8 17 C6.200 17 4.500 16.700 3.200 16 Z" fill="#1b1d26"/><path d="M6.200 11 H9.800 V14.600 C9 15.400 7 15.400 6.200 14.600 Z" fill="#7d553f"/><ellipse cx="8" cy="8.800" rx="4.100" ry="5.200" fill="#a87658"/><path d="M4.300 10.500 C5 13 6.500 14 8 14 C9.500 14 11 13 11.700 10.500 C10.800 12 9.500 12.600 8 12.600 C6.500 12.600 5.200 12 4.300 10.500 Z" fill="#7d553f"/><path d="M3.700 8 C3.300 3.600 5.400 2 8 2 C10.600 2 12.700 3.600 12.300 8 C11.800 5.800 10.600 5.200 8 5.200 C5.400 5.200 4.200 5.800 3.700 8 Z" fill="#1d140f"/><path d="M5.700 8.300 h1.500 M8.800 8.300 h1.500" stroke="#1d140f" stroke-width=".7"/><path d="M6.800 11.400 Q8 12.100 9.200 11.400" fill="none" stroke="#7d553f" stroke-width=".6"/></svg><svg class="pico" viewBox="0 0 10 8" width="8.400" height="6.700"><path d="M5 .2 A4.800 4.800 0 0 1 9.800 5 C9.800 6.200 9.500 7 9 7.800 C8.400 6.300 7 5.600 5 5.600 C3 5.600 1.600 6.300 1 7.800 C.5 7 .2 6.200 .2 5 A4.800 4.800 0 0 1 5 .2 Z" fill="#cdd0e2"/><circle cx="5" cy="3.400" r="1.600" fill="#141828"/></svg><span class="pname" style="color:#e8e9ee">Hannibal</span><span class="pos">M/AM (C)</span><span class="conbox"><svg viewBox="0 0 14 13" width="11" height="10.2"><path d="M7 12 C3.2 9.2 0.7 6.8 0.7 4 C0.7 2 2.2 0.7 3.9 0.7 C5.2 0.7 6.3 1.4 7 2.5 C7.7 1.4 8.8 0.7 10.1 0.7 C11.8 0.7 13.3 2 13.3 4 C13.3 6.8 10.8 9.2 7 12 Z" fill="#1fd071"/><path d="M1.2 6.2 L4.4 6.2 L5.6 4.6 L7.4 8 L8.8 6.2 L12.8 6.2" fill="none" stroke="#0f2a22" stroke-width="1.5" stroke-linejoin="round"/></svg></span><span class="shp" style="background:#1fc163"><svg viewBox="0 0 10 10"><path d="M2.2 5.3 L4.2 7.2 L7.8 2.9" fill="none" stroke="#0d3a22" stroke-width="1.6"/></svg></span><svg class="mor" viewBox="0 0 12 12" width="10.5" height="10.5"><circle cx="6" cy="6" r="5.6" fill="#efd545"/><path d="M3.500 3.900 L8.900 6 L3.500 8.100 L4.900 6 Z" fill="#4b3208" transform="rotate(-8 6 6)"/></svg><svg class="face" viewBox="0 0 12 12" width="10.7" height="10.7"><circle cx="6" cy="6" r="5.7" fill="#2acb72"/><circle cx="4.100" cy="4.500" r=".95" fill="#2a1a08"/><circle cx="7.900" cy="4.500" r=".95" fill="#2a1a08"/><path d="M3.2 6.4 Q6 10.6 8.8 6.4 Z" fill="#2a1a08"/></svg><span class="hap">Delighted</span><span class="formbox"><i style="left:7.0px;top:3.9px;width:10.2px;height:9.2px;background:#b8a43c;box-shadow:inset 0 0 0 1px #cbbd62"></i><i style="left:21.1px;top:3.1px;width:10.2px;height:10.0px;background:#679a12;box-shadow:inset 0 0 0 1px #8db63a"></i><i style="left:35.7px;top:3.9px;width:10.2px;height:9.2px;background:#b8a43c;box-shadow:inset 0 0 0 1px #cbbd62"></i><i style="left:49.7px;top:3.9px;width:10.2px;height:9.2px;background:#b8a43c;box-shadow:inset 0 0 0 1px #cbbd62"></i><i style="left:63.6px;top:3.9px;width:10.2px;height:9.2px;background:#b8a43c;box-shadow:inset 0 0 0 1px #cbbd62"></i></span><span class="apps">22 (7)</span><span class="gls">7</span><span class="ast">3</span><span class="avg ">6.70</span></div>
<div class="row" style="top:276.14px"><span class="cb"></span><span class="pick"><span class="pd">-</span><svg class="chev" viewBox="0 0 8 5" width="7.4" height="4.6"><path d="M0.8 0.8 L4 4 L7.2 0.8" fill="none" stroke="#e8e9ee" stroke-width="1.4"/></svg></span><span class="inf">Hol</span><span class="ibar" style="background:#7fdc3c"></span><svg class="av" viewBox="0 0 16 17" width="16" height="17"><circle cx="8" cy="8.5" r="7.8" fill="#252a3f" stroke="#343a52" stroke-width=".5"/><path d="M3.2 16 C3.6 14.2 5.4 13.6 8 13.6 C10.6 13.6 12.4 14.2 12.8 16 C11.500 16.700 9.800 17 8 17 C6.200 17 4.500 16.700 3.200 16 Z" fill="#1b1d26"/><path d="M6.200 11 H9.800 V14.600 C9 15.400 7 15.400 6.200 14.600 Z" fill="#4e3224"/><ellipse cx="8" cy="8.800" rx="4.100" ry="5.200" fill="#6f4a35"/><path d="M4.300 10.500 C5 13 6.500 14 8 14 C9.500 14 11 13 11.700 10.500 C10.800 12 9.500 12.600 8 12.600 C6.500 12.600 5.200 12 4.300 10.500 Z" fill="#4e3224"/><path d="M3.700 8 C3.300 3.600 5.400 2 8 2 C10.600 2 12.700 3.600 12.300 8 C11.800 5.800 10.600 5.200 8 5.200 C5.400 5.200 4.200 5.800 3.700 8 Z" fill="#17100c"/><path d="M5.700 8.300 h1.500 M8.800 8.300 h1.500" stroke="#17100c" stroke-width=".7"/><path d="M6.800 11.400 Q8 12.100 9.200 11.400" fill="none" stroke="#4e3224" stroke-width=".6"/></svg><svg class="pico" viewBox="0 0 10 8" width="8.400" height="6.700"><path d="M5 .2 A4.800 4.800 0 0 1 9.800 5 C9.800 6.200 9.500 7 9 7.800 C8.400 6.300 7 5.600 5 5.600 C3 5.600 1.600 6.300 1 7.800 C.5 7 .2 6.200 .2 5 A4.800 4.800 0 0 1 5 .2 Z" fill="#cdd0e2"/><circle cx="5" cy="3.400" r="1.600" fill="#141828"/></svg><span class="pname" style="color:#56a7d6">Florentino Luís</span><span class="pos">DM, M (C)</span><span class="conbox"><svg viewBox="0 0 14 13" width="11" height="10.2"><path d="M7 12 C3.2 9.2 0.7 6.8 0.7 4 C0.7 2 2.2 0.7 3.9 0.7 C5.2 0.7 6.3 1.4 7 2.5 C7.7 1.4 8.8 0.7 10.1 0.7 C11.8 0.7 13.3 2 13.3 4 C13.3 6.8 10.8 9.2 7 12 Z" fill="#b9d145"/><path d="M1.2 6.2 L4.4 6.2 L5.6 4.6 L7.4 8 L8.8 6.2 L12.8 6.2" fill="none" stroke="#0f2a22" stroke-width="1.5" stroke-linejoin="round"/></svg></span><span class="shp" style="background:#f79a45"><svg viewBox="0 0 10 10"><path d="M2.4 3.8 L5 6.3 L7.6 3.8" fill="none" stroke="#5a2c08" stroke-width="1.6"/></svg></span><svg class="mor" viewBox="0 0 12 12" width="10.5" height="10.5"><circle cx="6" cy="6" r="5.6" fill="#d2e23a"/><path d="M3.500 3.900 L8.900 6 L3.500 8.100 L4.900 6 Z" fill="#4b3208" transform="rotate(-38 6 6)"/></svg><svg class="face" viewBox="0 0 12 12" width="10.7" height="10.7"><circle cx="6" cy="6" r="5.7" fill="#b44df0"/><circle cx="4.100" cy="4.500" r=".95" fill="#2a1a08"/><circle cx="7.900" cy="4.500" r=".95" fill="#2a1a08"/><path d="M3.9 8.4 Q6 6.8 8.1 8.4" fill="none" stroke="#2a1a08" stroke-width="1"/></svg><span class="hap">Satisfied</span><span class="formbox"><i style="left:6.5px;top:2.0px;width:11.2px;height:11.1px;background:#18a862;box-shadow:inset 0 0 0 1px #42c98c"></i><i style="left:21.1px;top:3.9px;width:10.2px;height:9.2px;background:#b8a43c;box-shadow:inset 0 0 0 1px #cbbd62"></i><i style="left:35.7px;top:3.9px;width:10.2px;height:9.2px;background:#b8a43c;box-shadow:inset 0 0 0 1px #cbbd62"></i><i style="left:49.7px;top:3.9px;width:10.2px;height:9.2px;background:#b8a43c;box-shadow:inset 0 0 0 1px #cbbd62"></i><i style="left:63.6px;top:3.9px;width:10.2px;height:9.2px;background:#b8a43c;box-shadow:inset 0 0 0 1px #cbbd62"></i></span><span class="apps">26 (11)</span><span class="gls">6</span><span class="ast">2</span><span class="avg ">6.79</span></div>
<div class="row alt" style="top:296.05px"><span class="cb"></span><span class="pick"><span class="pd">-</span><svg class="chev" viewBox="0 0 8 5" width="7.4" height="4.6"><path d="M0.8 0.8 L4 4 L7.2 0.8" fill="none" stroke="#e8e9ee" stroke-width="1.4"/></svg></span><span class="inf">Hol</span><svg class="av" viewBox="0 0 16 17" width="16" height="17"><circle cx="8" cy="8.5" r="7.8" fill="#252a3f" stroke="#343a52" stroke-width=".5"/><path d="M3.2 16 C3.6 14.2 5.4 13.6 8 13.6 C10.6 13.6 12.4 14.2 12.8 16 C11.500 16.700 9.800 17 8 17 C6.200 17 4.500 16.700 3.200 16 Z" fill="#1b1d26"/><path d="M6.200 11 H9.800 V14.600 C9 15.400 7 15.400 6.200 14.600 Z" fill="#7d553f"/><ellipse cx="8" cy="8.800" rx="4.100" ry="5.200" fill="#a87658"/><path d="M4.300 10.500 C5 13 6.500 14 8 14 C9.500 14 11 13 11.700 10.500 C10.800 12 9.500 12.600 8 12.600 C6.500 12.600 5.200 12 4.300 10.500 Z" fill="#7d553f"/><path d="M3.700 8 C3.300 3.600 5.400 2 8 2 C10.600 2 12.700 3.600 12.300 8 C11.800 5.800 10.600 5.200 8 5.200 C5.400 5.200 4.200 5.800 3.700 8 Z" fill="#1d140f"/><path d="M5.700 8.300 h1.500 M8.800 8.300 h1.500" stroke="#1d140f" stroke-width=".7"/><path d="M6.800 11.400 Q8 12.100 9.200 11.400" fill="none" stroke="#7d553f" stroke-width=".6"/></svg><svg class="pico" viewBox="0 0 10 8" width="8.400" height="6.700"><path d="M5 .2 A4.800 4.800 0 0 1 9.800 5 C9.800 6.200 9.500 7 9 7.800 C8.400 6.300 7 5.600 5 5.600 C3 5.600 1.600 6.300 1 7.800 C.5 7 .2 6.200 .2 5 A4.800 4.800 0 0 1 5 .2 Z" fill="#cdd0e2"/><circle cx="5" cy="3.400" r="1.600" fill="#141828"/></svg><span class="pname" style="color:#e8e9ee">Kyle Walker</span><span class="pos">D (RC), WB (R)</span><span class="conbox"><svg viewBox="0 0 14 13" width="11" height="10.2"><path d="M7 12 C3.2 9.2 0.7 6.8 0.7 4 C0.7 2 2.2 0.7 3.9 0.7 C5.2 0.7 6.3 1.4 7 2.5 C7.7 1.4 8.8 0.7 10.1 0.7 C11.8 0.7 13.3 2 13.3 4 C13.3 6.8 10.8 9.2 7 12 Z" fill="#1fd071"/><path d="M1.2 6.2 L4.4 6.2 L5.6 4.6 L7.4 8 L8.8 6.2 L12.8 6.2" fill="none" stroke="#0f2a22" stroke-width="1.5" stroke-linejoin="round"/></svg></span><span class="shp" style="background:#1fc163"><svg viewBox="0 0 10 10"><path d="M2.2 5.3 L4.2 7.2 L7.8 2.9" fill="none" stroke="#0d3a22" stroke-width="1.6"/></svg></span><svg class="mor" viewBox="0 0 12 12" width="10.5" height="10.5"><circle cx="6" cy="6" r="5.6" fill="#efd545"/><path d="M3.500 3.900 L8.900 6 L3.500 8.100 L4.900 6 Z" fill="#4b3208" transform="rotate(-8 6 6)"/></svg><svg class="face" viewBox="0 0 12 12" width="10.7" height="10.7"><circle cx="6" cy="6" r="5.7" fill="#2acb72"/><circle cx="4.100" cy="4.500" r=".95" fill="#2a1a08"/><circle cx="7.900" cy="4.500" r=".95" fill="#2a1a08"/><path d="M3.2 6.4 Q6 10.6 8.8 6.4 Z" fill="#2a1a08"/></svg><span class="hap">Delighted</span><span class="formbox"><i style="left:6.5px;top:2.0px;width:11.2px;height:11.1px;background:#18a862;box-shadow:inset 0 0 0 1px #42c98c"></i><i style="left:21.1px;top:3.9px;width:10.2px;height:9.2px;background:#b8a43c;box-shadow:inset 0 0 0 1px #cbbd62"></i><i style="left:35.7px;top:3.9px;width:10.2px;height:9.2px;background:#b8a43c;box-shadow:inset 0 0 0 1px #cbbd62"></i><i style="left:49.7px;top:3.1px;width:10.2px;height:10.0px;background:#679a12;box-shadow:inset 0 0 0 1px #8db63a"></i><i style="left:63.6px;top:3.9px;width:10.2px;height:9.2px;background:#b8a43c;box-shadow:inset 0 0 0 1px #cbbd62"></i></span><span class="apps">36</span><span class="gls">5</span><span class="ast">6</span><span class="avg ">6.84</span></div>
<div class="row" style="top:315.96px"><span class="cb"></span><span class="pick"><span class="pd">-</span><svg class="chev" viewBox="0 0 8 5" width="7.4" height="4.6"><path d="M0.8 0.8 L4 4 L7.2 0.8" fill="none" stroke="#e8e9ee" stroke-width="1.4"/></svg></span><span class="inf">Hol</span><svg class="av" viewBox="0 0 16 17" width="16" height="17"><circle cx="8" cy="8.5" r="7.8" fill="#252a3f" stroke="#343a52" stroke-width=".5"/><path d="M3.2 16 C3.6 14.2 5.4 13.6 8 13.6 C10.6 13.6 12.4 14.2 12.8 16 C11.500 16.700 9.800 17 8 17 C6.200 17 4.500 16.700 3.200 16 Z" fill="#1b1d26"/><path d="M6.200 11 H9.800 V14.600 C9 15.400 7 15.400 6.200 14.600 Z" fill="#a97f68"/><ellipse cx="8" cy="8.800" rx="4.100" ry="5.200" fill="#d8ab8e"/><path d="M4.300 10.500 C5 13 6.500 14 8 14 C9.500 14 11 13 11.700 10.500 C10.800 12 9.500 12.600 8 12.600 C6.500 12.600 5.200 12 4.300 10.500 Z" fill="#a97f68"/><path d="M3.700 8 C3.300 3.600 5.400 2 8 2 C10.600 2 12.700 3.600 12.300 8 C11.800 5.800 10.600 5.200 8 5.200 C5.400 5.200 4.200 5.800 3.700 8 Z" fill="#4a3828"/><path d="M5.700 8.300 h1.500 M8.800 8.300 h1.500" stroke="#4a3828" stroke-width=".7"/><path d="M6.800 11.400 Q8 12.100 9.200 11.400" fill="none" stroke="#a97f68" stroke-width=".6"/></svg><svg class="pico" viewBox="0 0 10 8" width="8.400" height="6.700"><path d="M5 .2 A4.800 4.800 0 0 1 9.800 5 C9.800 6.200 9.500 7 9 7.800 C8.400 6.300 7 5.600 5 5.600 C3 5.600 1.600 6.300 1 7.800 C.5 7 .2 6.200 .2 5 A4.800 4.800 0 0 1 5 .2 Z" fill="#cdd0e2"/><circle cx="5" cy="3.400" r="1.600" fill="#141828"/></svg><span class="pname" style="color:#e8e9ee">Josh Cullen</span><span class="pos">DM, M (C)</span><span class="conbox"><svg viewBox="0 0 14 13" width="11" height="10.2"><path d="M7 12 C3.2 9.2 0.7 6.8 0.7 4 C0.7 2 2.2 0.7 3.9 0.7 C5.2 0.7 6.3 1.4 7 2.5 C7.7 1.4 8.8 0.7 10.1 0.7 C11.8 0.7 13.3 2 13.3 4 C13.3 6.8 10.8 9.2 7 12 Z" fill="#1fd071"/><path d="M1.2 6.2 L4.4 6.2 L5.6 4.6 L7.4 8 L8.8 6.2 L12.8 6.2" fill="none" stroke="#0f2a22" stroke-width="1.5" stroke-linejoin="round"/></svg></span><span class="shp" style="background:#f79a45"><svg viewBox="0 0 10 10"><path d="M2.4 3.8 L5 6.3 L7.6 3.8" fill="none" stroke="#5a2c08" stroke-width="1.6"/></svg></span><svg class="mor" viewBox="0 0 12 12" width="10.5" height="10.5"><circle cx="6" cy="6" r="5.6" fill="#efd545"/><path d="M3.500 3.900 L8.900 6 L3.500 8.100 L4.900 6 Z" fill="#4b3208" transform="rotate(-8 6 6)"/></svg><svg class="face" viewBox="0 0 12 12" width="10.7" height="10.7"><circle cx="6" cy="6" r="5.7" fill="#2acb72"/><circle cx="4.100" cy="4.500" r=".95" fill="#2a1a08"/><circle cx="7.900" cy="4.500" r=".95" fill="#2a1a08"/><path d="M3.2 6.4 Q6 10.6 8.8 6.4 Z" fill="#2a1a08"/></svg><span class="hap">Delighted</span><span class="formbox"><i style="left:7.0px;top:3.1px;width:10.2px;height:10.0px;background:#679a12;box-shadow:inset 0 0 0 1px #8db63a"></i><i style="left:21.1px;top:3.9px;width:10.2px;height:9.2px;background:#b8a43c;box-shadow:inset 0 0 0 1px #cbbd62"></i><i style="left:35.7px;top:3.9px;width:10.2px;height:9.2px;background:#b8a43c;box-shadow:inset 0 0 0 1px #cbbd62"></i><i style="left:49.7px;top:3.9px;width:10.2px;height:9.2px;background:#b8a43c;box-shadow:inset 0 0 0 1px #cbbd62"></i><i style="left:63.6px;top:3.9px;width:10.2px;height:9.2px;background:#b8a43c;box-shadow:inset 0 0 0 1px #cbbd62"></i></span><span class="apps">34 (1)</span><span class="gls">4</span><span class="ast">3</span><span class="avg ">6.63</span></div>
<div class="row alt" style="top:335.87px"><span class="cb"></span><span class="pick"><span class="pd">-</span><svg class="chev" viewBox="0 0 8 5" width="7.4" height="4.6"><path d="M0.8 0.8 L4 4 L7.2 0.8" fill="none" stroke="#e8e9ee" stroke-width="1.4"/></svg></span><span class="inf">Hol</span><svg class="av" viewBox="0 0 16 17" width="16" height="17"><circle cx="8" cy="8.5" r="7.8" fill="#252a3f" stroke="#343a52" stroke-width=".5"/><path d="M3.2 16 C3.6 14.2 5.4 13.6 8 13.6 C10.6 13.6 12.4 14.2 12.8 16 C11.500 16.700 9.800 17 8 17 C6.200 17 4.500 16.700 3.200 16 Z" fill="#1b1d26"/><path d="M6.200 11 H9.800 V14.600 C9 15.400 7 15.400 6.200 14.600 Z" fill="#a97f68"/><ellipse cx="8" cy="8.800" rx="4.100" ry="5.200" fill="#d8ab8e"/><path d="M4.300 10.500 C5 13 6.500 14 8 14 C9.500 14 11 13 11.700 10.500 C10.800 12 9.500 12.600 8 12.600 C6.500 12.600 5.200 12 4.300 10.500 Z" fill="#a97f68"/><path d="M3.700 8 C3.300 3.600 5.400 2 8 2 C10.600 2 12.700 3.600 12.300 8 C11.800 5.800 10.600 5.200 8 5.200 C5.400 5.200 4.200 5.800 3.700 8 Z" fill="#4a3828"/><path d="M5.700 8.300 h1.500 M8.800 8.300 h1.500" stroke="#4a3828" stroke-width=".7"/><path d="M6.800 11.400 Q8 12.100 9.200 11.400" fill="none" stroke="#a97f68" stroke-width=".6"/></svg><svg class="pico" viewBox="0 0 10 8" width="8.400" height="6.700"><path d="M5 .2 A4.800 4.800 0 0 1 9.800 5 C9.800 6.200 9.500 7 9 7.800 C8.400 6.300 7 5.600 5 5.600 C3 5.600 1.600 6.300 1 7.800 C.5 7 .2 6.200 .2 5 A4.800 4.800 0 0 1 5 .2 Z" fill="#cdd0e2"/><circle cx="5" cy="3.400" r="1.600" fill="#141828"/></svg><span class="pname" style="color:#e8e9ee">Zian Flemming</span><span class="pos">AM (RLC), ST (C)</span><span class="conbox"><svg viewBox="0 0 14 13" width="11" height="10.2"><path d="M7 12 C3.2 9.2 0.7 6.8 0.7 4 C0.7 2 2.2 0.7 3.9 0.7 C5.2 0.7 6.3 1.4 7 2.5 C7.7 1.4 8.8 0.7 10.1 0.7 C11.8 0.7 13.3 2 13.3 4 C13.3 6.8 10.8 9.2 7 12 Z" fill="#1fd071"/><path d="M1.2 6.2 L4.4 6.2 L5.6 4.6 L7.4 8 L8.8 6.2 L12.8 6.2" fill="none" stroke="#0f2a22" stroke-width="1.5" stroke-linejoin="round"/></svg></span><span class="shp" style="background:#1fc163"><svg viewBox="0 0 10 10"><path d="M2.2 5.3 L4.2 7.2 L7.8 2.9" fill="none" stroke="#0d3a22" stroke-width="1.6"/></svg></span><svg class="mor" viewBox="0 0 12 12" width="10.5" height="10.5"><circle cx="6" cy="6" r="5.6" fill="#efd545"/><path d="M3.500 3.900 L8.900 6 L3.500 8.100 L4.900 6 Z" fill="#4b3208" transform="rotate(-8 6 6)"/></svg><svg class="face" viewBox="0 0 12 12" width="10.7" height="10.7"><circle cx="6" cy="6" r="5.7" fill="#f2cc55"/><circle cx="4.100" cy="4.500" r=".95" fill="#2a1a08"/><circle cx="7.900" cy="4.500" r=".95" fill="#2a1a08"/><path d="M3.3 6.500 Q6 10.400 8.700 6.500 Z" fill="#2a1a08"/></svg><span class="hap">Happy</span><span class="formbox"><i style="left:7.0px;top:3.9px;width:10.2px;height:9.2px;background:#b8a43c;box-shadow:inset 0 0 0 1px #cbbd62"></i><i style="left:21.1px;top:3.9px;width:10.2px;height:9.2px;background:#b8a43c;box-shadow:inset 0 0 0 1px #cbbd62"></i><i style="left:35.7px;top:3.9px;width:10.2px;height:9.2px;background:#b8a43c;box-shadow:inset 0 0 0 1px #cbbd62"></i><i style="left:49.7px;top:6.1px;width:10.2px;height:7.0px;background:#ee1c25;box-shadow:inset 0 0 0 1px #f4555c"></i><i style="left:63.6px;top:3.9px;width:10.2px;height:9.2px;background:#b8a43c;box-shadow:inset 0 0 0 1px #cbbd62"></i></span><span class="apps">28 (4)</span><span class="gls">4</span><span class="ast">1</span><span class="avg ">6.51</span></div>
<div class="row" style="top:355.78px"><span class="cb"></span><span class="pick"><span class="pd">-</span><svg class="chev" viewBox="0 0 8 5" width="7.4" height="4.6"><path d="M0.8 0.8 L4 4 L7.2 0.8" fill="none" stroke="#e8e9ee" stroke-width="1.4"/></svg></span><span class="inf">Int</span><svg class="av" viewBox="0 0 16 17" width="16" height="17"><circle cx="8" cy="8.5" r="7.8" fill="#252a3f" stroke="#343a52" stroke-width=".5"/><path d="M8 2.2 C10.6 2.2 11.6 4.2 11.4 6.6 C11.2 9 10.4 10.6 10 11.6 C10.2 12.8 11.4 13.6 12.8 14.4 L11 16.6 L5 16.6 L3.2 14.4 C4.600 13.6 5.800 12.800 6 11.600 C5.600 10.600 4.800 9 4.600 6.600 C4.400 4.200 5.400 2.200 8 2.200 Z" fill="#020203"/></svg><svg class="pico" viewBox="0 0 10 8" width="8.400" height="6.700"><path d="M5 .2 A4.800 4.800 0 0 1 9.800 5 C9.800 6.200 9.500 7 9 7.800 C8.400 6.300 7 5.600 5 5.600 C3 5.600 1.600 6.300 1 7.800 C.5 7 .2 6.200 .2 5 A4.800 4.800 0 0 1 5 .2 Z" fill="#cdd0e2"/><circle cx="5" cy="3.400" r="1.600" fill="#141828"/></svg><span class="pname" style="color:#e0628a">Luca Koleosho</span><span class="pos">M (RL), AM (RLC), ST (C)</span><span class="conbox"><svg viewBox="0 0 14 13" width="11" height="10.2"><path d="M7 12 C3.2 9.2 0.7 6.8 0.7 4 C0.7 2 2.2 0.7 3.9 0.7 C5.2 0.7 6.3 1.4 7 2.5 C7.7 1.4 8.8 0.7 10.1 0.7 C11.8 0.7 13.3 2 13.3 4 C13.3 6.8 10.8 9.2 7 12 Z" fill="#1fd071"/><path d="M1.2 6.2 L4.4 6.2 L5.6 4.6 L7.4 8 L8.8 6.2 L12.8 6.2" fill="none" stroke="#0f2a22" stroke-width="1.5" stroke-linejoin="round"/></svg></span><span class="shp" style="background:#1fc163"><svg viewBox="0 0 10 10"><path d="M2.2 5.3 L4.2 7.2 L7.8 2.9" fill="none" stroke="#0d3a22" stroke-width="1.6"/></svg></span><svg class="mor" viewBox="0 0 12 12" width="10.5" height="10.5"><circle cx="6" cy="6" r="5.6" fill="#efd545"/><path d="M3.500 3.900 L8.900 6 L3.500 8.100 L4.900 6 Z" fill="#4b3208" transform="rotate(-8 6 6)"/></svg><span class="hap" style="left:648px">-</span><span class="formbox"><span class="dash">-</span></span><span class="apps">32</span><span class="gls">4</span><span class="ast">4</span><span class="avg hi">7.06</span></div>
<div class="row alt" style="top:375.69px"><span class="cb"></span><span class="pick"><span class="pd">-</span><svg class="chev" viewBox="0 0 8 5" width="7.4" height="4.6"><path d="M0.8 0.8 L4 4 L7.2 0.8" fill="none" stroke="#e8e9ee" stroke-width="1.4"/></svg></span><span class="inf">Hol</span><span class="ibar" style="background:#7fdc3c"></span><svg class="av" viewBox="0 0 16 17" width="16" height="17"><circle cx="8" cy="8.5" r="7.8" fill="#252a3f" stroke="#343a52" stroke-width=".5"/><path d="M3.2 16 C3.6 14.2 5.4 13.6 8 13.6 C10.6 13.6 12.4 14.2 12.8 16 C11.500 16.700 9.800 17 8 17 C6.200 17 4.500 16.700 3.200 16 Z" fill="#1b1d26"/><path d="M6.200 11 H9.800 V14.600 C9 15.400 7 15.400 6.200 14.600 Z" fill="#4e3224"/><ellipse cx="8" cy="8.800" rx="4.100" ry="5.200" fill="#6f4a35"/><path d="M4.300 10.500 C5 13 6.500 14 8 14 C9.500 14 11 13 11.700 10.500 C10.800 12 9.500 12.600 8 12.600 C6.500 12.600 5.200 12 4.300 10.500 Z" fill="#4e3224"/><path d="M3.700 8 C3.300 3.600 5.400 2 8 2 C10.600 2 12.700 3.600 12.300 8 C11.800 5.800 10.600 5.200 8 5.200 C5.400 5.200 4.200 5.800 3.700 8 Z" fill="#17100c"/><path d="M5.700 8.300 h1.500 M8.800 8.300 h1.500" stroke="#17100c" stroke-width=".7"/><path d="M6.800 11.400 Q8 12.100 9.200 11.400" fill="none" stroke="#4e3224" stroke-width=".6"/></svg><svg class="pico" viewBox="0 0 10 8" width="8.400" height="6.700"><path d="M5 .2 A4.800 4.800 0 0 1 9.800 5 C9.800 6.200 9.500 7 9 7.800 C8.400 6.300 7 5.600 5 5.600 C3 5.600 1.600 6.300 1 7.800 C.5 7 .2 6.200 .2 5 A4.800 4.800 0 0 1 5 .2 Z" fill="#cdd0e2"/><circle cx="5" cy="3.400" r="1.600" fill="#141828"/></svg><span class="pname" style="color:#e8e9ee">Lucas Pires</span><span class="pos">D/WB (L), M/AM (R)</span><span class="conbox"><svg viewBox="0 0 14 13" width="11" height="10.2"><path d="M7 12 C3.2 9.2 0.7 6.8 0.7 4 C0.7 2 2.2 0.7 3.9 0.7 C5.2 0.7 6.3 1.4 7 2.5 C7.7 1.4 8.8 0.7 10.1 0.7 C11.8 0.7 13.3 2 13.3 4 C13.3 6.8 10.8 9.2 7 12 Z" fill="#1fd071"/><path d="M1.2 6.2 L4.4 6.2 L5.6 4.6 L7.4 8 L8.8 6.2 L12.8 6.2" fill="none" stroke="#0f2a22" stroke-width="1.5" stroke-linejoin="round"/></svg></span><span class="shp" style="background:#f79a45"><svg viewBox="0 0 10 10"><path d="M2.4 3.8 L5 6.3 L7.6 3.8" fill="none" stroke="#5a2c08" stroke-width="1.6"/></svg></span><svg class="mor" viewBox="0 0 12 12" width="10.5" height="10.5"><circle cx="6" cy="6" r="5.6" fill="#efd545"/><path d="M3.500 3.900 L8.900 6 L3.500 8.100 L4.900 6 Z" fill="#4b3208" transform="rotate(-8 6 6)"/></svg><svg class="face" viewBox="0 0 12 12" width="10.7" height="10.7"><circle cx="6" cy="6" r="5.7" fill="#2acb72"/><circle cx="4.100" cy="4.500" r=".95" fill="#2a1a08"/><circle cx="7.900" cy="4.500" r=".95" fill="#2a1a08"/><path d="M3.2 6.4 Q6 10.6 8.8 6.4 Z" fill="#2a1a08"/></svg><span class="hap">Delighted</span><span class="formbox"><i style="left:7.0px;top:3.9px;width:10.2px;height:9.2px;background:#b8a43c;box-shadow:inset 0 0 0 1px #cbbd62"></i><i style="left:21.1px;top:3.9px;width:10.2px;height:9.2px;background:#b8a43c;box-shadow:inset 0 0 0 1px #cbbd62"></i><i style="left:35.7px;top:3.1px;width:10.2px;height:10.0px;background:#679a12;box-shadow:inset 0 0 0 1px #8db63a"></i><i style="left:49.7px;top:3.9px;width:10.2px;height:9.2px;background:#b8a43c;box-shadow:inset 0 0 0 1px #cbbd62"></i><i style="left:63.6px;top:3.9px;width:10.2px;height:9.2px;background:#b8a43c;box-shadow:inset 0 0 0 1px #cbbd62"></i></span><span class="apps">15 (24)</span><span class="gls">4</span><span class="ast">8</span><span class="avg ">6.89</span></div>
<div class="row" style="top:395.60px"><span class="cb"></span><span class="pick"><span class="pd">-</span><svg class="chev" viewBox="0 0 8 5" width="7.4" height="4.6"><path d="M0.8 0.8 L4 4 L7.2 0.8" fill="none" stroke="#e8e9ee" stroke-width="1.4"/></svg></span><span class="inf">Hol</span><svg class="av" viewBox="0 0 16 17" width="16" height="17"><circle cx="8" cy="8.5" r="7.8" fill="#252a3f" stroke="#343a52" stroke-width=".5"/><path d="M3.2 16 C3.6 14.2 5.4 13.6 8 13.6 C10.6 13.6 12.4 14.2 12.8 16 C11.500 16.700 9.800 17 8 17 C6.200 17 4.500 16.700 3.200 16 Z" fill="#1b1d26"/><path d="M6.200 11 H9.800 V14.600 C9 15.400 7 15.400 6.200 14.600 Z" fill="#7d553f"/><ellipse cx="8" cy="8.800" rx="4.100" ry="5.200" fill="#a87658"/><path d="M4.300 10.500 C5 13 6.500 14 8 14 C9.500 14 11 13 11.700 10.500 C10.800 12 9.500 12.600 8 12.600 C6.500 12.600 5.200 12 4.300 10.500 Z" fill="#7d553f"/><path d="M3.700 8 C3.300 3.600 5.400 2 8 2 C10.600 2 12.700 3.600 12.300 8 C11.800 5.800 10.600 5.200 8 5.200 C5.400 5.200 4.200 5.800 3.700 8 Z" fill="#1d140f"/><path d="M5.700 8.300 h1.500 M8.800 8.300 h1.500" stroke="#1d140f" stroke-width=".7"/><path d="M6.800 11.400 Q8 12.100 9.200 11.400" fill="none" stroke="#7d553f" stroke-width=".6"/></svg><svg class="pico" viewBox="0 0 10 8" width="8.400" height="6.700"><path d="M5 .2 A4.800 4.800 0 0 1 9.800 5 C9.800 6.200 9.500 7 9 7.800 C8.400 6.300 7 5.600 5 5.600 C3 5.600 1.600 6.300 1 7.800 C.5 7 .2 6.200 .2 5 A4.800 4.800 0 0 1 5 .2 Z" fill="#cdd0e2"/><circle cx="5" cy="3.400" r="1.600" fill="#141828"/></svg><span class="pname" style="color:#e8e9ee">Quilindschy Hartman</span><span class="pos">D/WB (L)</span><span class="conbox"><svg viewBox="0 0 14 13" width="11" height="10.2"><path d="M7 12 C3.2 9.2 0.7 6.8 0.7 4 C0.7 2 2.2 0.7 3.9 0.7 C5.2 0.7 6.3 1.4 7 2.5 C7.7 1.4 8.8 0.7 10.1 0.7 C11.8 0.7 13.3 2 13.3 4 C13.3 6.8 10.8 9.2 7 12 Z" fill="#1fd071"/><path d="M1.2 6.2 L4.4 6.2 L5.6 4.6 L7.4 8 L8.8 6.2 L12.8 6.2" fill="none" stroke="#0f2a22" stroke-width="1.5" stroke-linejoin="round"/></svg></span><span class="shp" style="background:#f79a45"><svg viewBox="0 0 10 10"><path d="M2.4 3.8 L5 6.3 L7.6 3.8" fill="none" stroke="#5a2c08" stroke-width="1.6"/></svg></span><svg class="mor" viewBox="0 0 12 12" width="10.5" height="10.5"><circle cx="6" cy="6" r="5.6" fill="#efd545"/><path d="M3.500 3.900 L8.900 6 L3.500 8.100 L4.900 6 Z" fill="#4b3208" transform="rotate(-8 6 6)"/></svg><svg class="face" viewBox="0 0 12 12" width="10.7" height="10.7"><circle cx="6" cy="6" r="5.7" fill="#f2cc55"/><circle cx="4.100" cy="4.500" r=".95" fill="#2a1a08"/><circle cx="7.900" cy="4.500" r=".95" fill="#2a1a08"/><path d="M3.3 6.500 Q6 10.400 8.700 6.500 Z" fill="#2a1a08"/></svg><span class="hap">Happy</span><span class="formbox"><i style="left:7.0px;top:3.1px;width:10.2px;height:10.0px;background:#679a12;box-shadow:inset 0 0 0 1px #8db63a"></i><i style="left:21.1px;top:3.9px;width:10.2px;height:9.2px;background:#b8a43c;box-shadow:inset 0 0 0 1px #cbbd62"></i><i style="left:35.7px;top:3.1px;width:10.2px;height:10.0px;background:#679a12;box-shadow:inset 0 0 0 1px #8db63a"></i><i style="left:49.7px;top:3.9px;width:10.2px;height:9.2px;background:#b8a43c;box-shadow:inset 0 0 0 1px #cbbd62"></i><i style="left:63.6px;top:3.9px;width:10.2px;height:9.2px;background:#b8a43c;box-shadow:inset 0 0 0 1px #cbbd62"></i></span><span class="apps">26 (1)</span><span class="gls">3</span><span class="ast">7</span><span class="avg ">6.65</span></div>
<div class="row alt" style="top:415.51px"><span class="cb"></span><span class="pick"><span class="pd">-</span><svg class="chev" viewBox="0 0 8 5" width="7.4" height="4.6"><path d="M0.8 0.8 L4 4 L7.2 0.8" fill="none" stroke="#e8e9ee" stroke-width="1.4"/></svg></span><span class="inf">Int</span><svg class="av" viewBox="0 0 16 17" width="16" height="17"><circle cx="8" cy="8.5" r="7.8" fill="#252a3f" stroke="#343a52" stroke-width=".5"/><path d="M3.2 16 C3.6 14.2 5.4 13.6 8 13.6 C10.6 13.6 12.4 14.2 12.8 16 C11.500 16.700 9.800 17 8 17 C6.200 17 4.500 16.700 3.200 16 Z" fill="#1b1d26"/><path d="M6.200 11 H9.800 V14.600 C9 15.400 7 15.400 6.200 14.600 Z" fill="#a97f68"/><ellipse cx="8" cy="8.800" rx="4.100" ry="5.200" fill="#d8ab8e"/><path d="M4.300 10.500 C5 13 6.500 14 8 14 C9.500 14 11 13 11.700 10.500 C10.800 12 9.500 12.600 8 12.600 C6.500 12.600 5.200 12 4.300 10.500 Z" fill="#a97f68"/><path d="M3.700 8 C3.300 3.600 5.400 2 8 2 C10.600 2 12.700 3.600 12.300 8 C11.800 5.800 10.600 5.200 8 5.200 C5.400 5.200 4.200 5.800 3.700 8 Z" fill="#4a3828"/><path d="M5.700 8.300 h1.500 M8.800 8.300 h1.500" stroke="#4a3828" stroke-width=".7"/><path d="M6.800 11.400 Q8 12.100 9.200 11.400" fill="none" stroke="#a97f68" stroke-width=".6"/></svg><svg class="pico" viewBox="0 0 10 8" width="8.400" height="6.700"><path d="M5 .2 A4.800 4.800 0 0 1 9.800 5 C9.800 6.200 9.500 7 9 7.800 C8.400 6.300 7 5.600 5 5.600 C3 5.600 1.600 6.300 1 7.800 C.5 7 .2 6.200 .2 5 A4.800 4.800 0 0 1 5 .2 Z" fill="#cdd0e2"/><circle cx="5" cy="3.400" r="1.600" fill="#141828"/></svg><span class="pname" style="color:#e8e9ee">Jacob Bruun Larsen</span><span class="pos">M/AM (RL)</span><span class="conbox"><svg viewBox="0 0 14 13" width="11" height="10.2"><path d="M7 12 C3.2 9.2 0.7 6.8 0.7 4 C0.7 2 2.2 0.7 3.9 0.7 C5.2 0.7 6.3 1.4 7 2.5 C7.7 1.4 8.8 0.7 10.1 0.7 C11.8 0.7 13.3 2 13.3 4 C13.3 6.8 10.8 9.2 7 12 Z" fill="#1fd071"/><path d="M1.2 6.2 L4.4 6.2 L5.6 4.6 L7.4 8 L8.8 6.2 L12.8 6.2" fill="none" stroke="#0f2a22" stroke-width="1.5" stroke-linejoin="round"/></svg></span><span class="shp" style="background:#ee5348"><svg viewBox="0 0 10 10"><path d="M2.6 2.4 L5 4.6 L7.4 2.4 M2.6 5.4 L5 7.6 L7.4 5.4" fill="none" stroke="#5a120c" stroke-width="1.4"/></svg></span><svg class="mor" viewBox="0 0 12 12" width="10.5" height="10.5"><circle cx="6" cy="6" r="5.6" fill="#efd545"/><path d="M3.500 3.900 L8.900 6 L3.500 8.100 L4.900 6 Z" fill="#4b3208" transform="rotate(-8 6 6)"/></svg><svg class="face" viewBox="0 0 12 12" width="10.7" height="10.7"><circle cx="6" cy="6" r="5.7" fill="#f5863d"/><circle cx="4.100" cy="4.500" r=".95" fill="#2a1a08"/><circle cx="7.900" cy="4.500" r=".95" fill="#2a1a08"/><path d="M3.9 7.9 L8.1 7.9" fill="none" stroke="#2a1a08" stroke-width="1"/></svg><span class="hap">Concerned</span><span class="formbox"><i style="left:7.0px;top:3.9px;width:10.2px;height:9.2px;background:#b8a43c;box-shadow:inset 0 0 0 1px #cbbd62"></i><i style="left:21.1px;top:3.9px;width:10.2px;height:9.2px;background:#b8a43c;box-shadow:inset 0 0 0 1px #cbbd62"></i><i style="left:35.7px;top:3.9px;width:10.2px;height:9.2px;background:#b8a43c;box-shadow:inset 0 0 0 1px #cbbd62"></i><i style="left:49.7px;top:3.9px;width:10.2px;height:9.2px;background:#b8a43c;box-shadow:inset 0 0 0 1px #cbbd62"></i><i style="left:63.6px;top:3.9px;width:10.2px;height:9.2px;background:#b8a43c;box-shadow:inset 0 0 0 1px #cbbd62"></i></span><span class="apps">8 (23)</span><span class="gls">2</span><span class="ast">4</span><span class="avg ">6.72</span></div>
<div class="row" style="top:435.42px"><span class="cb"></span><span class="pick"><span class="pd">-</span><svg class="chev" viewBox="0 0 8 5" width="7.4" height="4.6"><path d="M0.8 0.8 L4 4 L7.2 0.8" fill="none" stroke="#e8e9ee" stroke-width="1.4"/></svg></span><span class="inf">Inj</span><svg class="av" viewBox="0 0 16 17" width="16" height="17"><circle cx="8" cy="8.5" r="7.8" fill="#252a3f" stroke="#343a52" stroke-width=".5"/><path d="M3.2 16 C3.6 14.2 5.4 13.6 8 13.6 C10.6 13.6 12.4 14.2 12.8 16 C11.500 16.700 9.800 17 8 17 C6.200 17 4.500 16.700 3.200 16 Z" fill="#1b1d26"/><path d="M6.200 11 H9.800 V14.600 C9 15.400 7 15.400 6.200 14.600 Z" fill="#7d553f"/><ellipse cx="8" cy="8.800" rx="4.100" ry="5.200" fill="#a87658"/><path d="M4.300 10.500 C5 13 6.500 14 8 14 C9.500 14 11 13 11.700 10.500 C10.800 12 9.500 12.600 8 12.600 C6.500 12.600 5.200 12 4.300 10.500 Z" fill="#7d553f"/><path d="M3.700 8 C3.300 3.600 5.400 2 8 2 C10.600 2 12.700 3.600 12.300 8 C11.800 5.800 10.600 5.200 8 5.200 C5.400 5.200 4.200 5.800 3.700 8 Z" fill="#1d140f"/><path d="M5.700 8.300 h1.500 M8.800 8.300 h1.500" stroke="#1d140f" stroke-width=".7"/><path d="M6.800 11.400 Q8 12.100 9.200 11.400" fill="none" stroke="#7d553f" stroke-width=".6"/></svg><svg class="pico" viewBox="0 0 10 8" width="8.400" height="6.700"><path d="M5 .2 A4.800 4.800 0 0 1 9.800 5 C9.800 6.200 9.500 7 9 7.800 C8.400 6.300 7 5.600 5 5.600 C3 5.600 1.600 6.300 1 7.800 C.5 7 .2 6.200 .2 5 A4.800 4.800 0 0 1 5 .2 Z" fill="#cdd0e2"/><circle cx="5" cy="3.400" r="1.600" fill="#141828"/></svg><span class="pname" style="color:#e0628a">Andréas Hountondji</span><span class="pos">AM (RL), ST (C)</span><span class="conbox"><svg viewBox="0 0 14 13" width="11" height="10.2"><path d="M7 12 C3.2 9.2 0.7 6.8 0.7 4 C0.7 2 2.2 0.7 3.9 0.7 C5.2 0.7 6.3 1.4 7 2.5 C7.7 1.4 8.8 0.7 10.1 0.7 C11.8 0.7 13.3 2 13.3 4 C13.3 6.8 10.8 9.2 7 12 Z" fill="#1fd071"/><path d="M1.2 6.2 L4.4 6.2 L5.6 4.6 L7.4 8 L8.8 6.2 L12.8 6.2" fill="none" stroke="#0f2a22" stroke-width="1.5" stroke-linejoin="round"/></svg></span><span class="shp" style="background:#f2cb45"><svg viewBox="0 0 10 10"><path d="M1.500 5 L8.500 5" fill="none" stroke="#4e3a06" stroke-width="1.700"/></svg></span><svg class="mor" viewBox="0 0 12 12" width="10.5" height="10.5"><circle cx="6" cy="6" r="5.6" fill="#efd545"/><path d="M3.500 3.900 L8.900 6 L3.500 8.100 L4.900 6 Z" fill="#4b3208" transform="rotate(-8 6 6)"/></svg><span class="hap" style="left:648px">-</span><span class="formbox"><span class="dash">-</span></span><span class="apps">25</span><span class="gls">2</span><span class="ast">2</span><span class="avg ">6.78</span></div>
<div class="row alt" style="top:455.33px"><span class="cb"></span><span class="pick"><span class="pd">-</span><svg class="chev" viewBox="0 0 8 5" width="7.4" height="4.6"><path d="M0.8 0.8 L4 4 L7.2 0.8" fill="none" stroke="#e8e9ee" stroke-width="1.4"/></svg></span><span class="inf">Hol</span><svg class="av" viewBox="0 0 16 17" width="16" height="17"><circle cx="8" cy="8.5" r="7.8" fill="#252a3f" stroke="#343a52" stroke-width=".5"/><path d="M3.2 16 C3.6 14.2 5.4 13.6 8 13.6 C10.6 13.6 12.4 14.2 12.8 16 C11.500 16.700 9.800 17 8 17 C6.200 17 4.500 16.700 3.200 16 Z" fill="#1b1d26"/><path d="M6.200 11 H9.800 V14.600 C9 15.400 7 15.400 6.200 14.600 Z" fill="#4e3224"/><ellipse cx="8" cy="8.800" rx="4.100" ry="5.200" fill="#6f4a35"/><path d="M4.300 10.500 C5 13 6.500 14 8 14 C9.500 14 11 13 11.700 10.500 C10.800 12 9.500 12.600 8 12.600 C6.500 12.600 5.200 12 4.300 10.500 Z" fill="#4e3224"/><path d="M3.700 8 C3.300 3.600 5.400 2 8 2 C10.600 2 12.700 3.600 12.300 8 C11.800 5.800 10.600 5.200 8 5.200 C5.400 5.200 4.200 5.800 3.700 8 Z" fill="#17100c"/><path d="M5.700 8.300 h1.500 M8.800 8.300 h1.500" stroke="#17100c" stroke-width=".7"/><path d="M6.800 11.400 Q8 12.100 9.200 11.400" fill="none" stroke="#4e3224" stroke-width=".6"/></svg><svg class="pico" viewBox="0 0 10 8" width="8.400" height="6.700"><path d="M5 .2 A4.800 4.800 0 0 1 9.800 5 C9.800 6.200 9.500 7 9 7.800 C8.400 6.300 7 5.600 5 5.600 C3 5.600 1.600 6.300 1 7.800 C.5 7 .2 6.200 .2 5 A4.800 4.800 0 0 1 5 .2 Z" fill="#cdd0e2"/><circle cx="5" cy="3.400" r="1.600" fill="#141828"/></svg><span class="pname" style="color:#e8e9ee">Josh Laurent</span><span class="pos">D (C), DM, M (C)</span><span class="conbox"><svg viewBox="0 0 14 13" width="11" height="10.2"><path d="M7 12 C3.2 9.2 0.7 6.8 0.7 4 C0.7 2 2.2 0.7 3.9 0.7 C5.2 0.7 6.3 1.4 7 2.5 C7.7 1.4 8.8 0.7 10.1 0.7 C11.8 0.7 13.3 2 13.3 4 C13.3 6.8 10.8 9.2 7 12 Z" fill="#1fd071"/><path d="M1.2 6.2 L4.4 6.2 L5.6 4.6 L7.4 8 L8.8 6.2 L12.8 6.2" fill="none" stroke="#0f2a22" stroke-width="1.5" stroke-linejoin="round"/></svg></span><span class="shp" style="background:#ec5552"><svg viewBox="0 0 10 10"><path d="M2.8 2.8 L7.2 7.2 M7.2 2.8 L2.8 7.2" fill="none" stroke="#5c1016" stroke-width="1.5"/></svg></span><svg class="mor" viewBox="0 0 12 12" width="10.5" height="10.5"><circle cx="6" cy="6" r="5.6" fill="#efd545"/><path d="M3.500 3.900 L8.900 6 L3.500 8.100 L4.900 6 Z" fill="#4b3208" transform="rotate(-8 6 6)"/></svg><svg class="face" viewBox="0 0 12 12" width="10.7" height="10.7"><circle cx="6" cy="6" r="5.7" fill="#a8d83e"/><circle cx="4.100" cy="4.500" r=".95" fill="#2a1a08"/><circle cx="7.900" cy="4.500" r=".95" fill="#2a1a08"/><path d="M3.3 6.6 Q6 10 8.7 6.6 Z" fill="#2a1a08"/></svg><span class="hap">Very Happy</span><span class="formbox"><i style="left:7.0px;top:3.9px;width:10.2px;height:9.2px;background:#b8a43c;box-shadow:inset 0 0 0 1px #cbbd62"></i><i style="left:21.1px;top:3.9px;width:10.2px;height:9.2px;background:#b8a43c;box-shadow:inset 0 0 0 1px #cbbd62"></i><i style="left:35.7px;top:3.9px;width:10.2px;height:9.2px;background:#b8a43c;box-shadow:inset 0 0 0 1px #cbbd62"></i><i style="left:49.7px;top:3.9px;width:10.2px;height:9.2px;background:#b8a43c;box-shadow:inset 0 0 0 1px #cbbd62"></i><i style="left:63.6px;top:3.9px;width:10.2px;height:9.2px;background:#b8a43c;box-shadow:inset 0 0 0 1px #cbbd62"></i></span><span class="apps">8 (30)</span><span class="gls">2</span><span class="ast">7</span><span class="avg ">6.85</span></div>
<div class="row" style="top:475.24px"><span class="cb"></span><span class="pick"><span class="pd">-</span><svg class="chev" viewBox="0 0 8 5" width="7.4" height="4.6"><path d="M0.8 0.8 L4 4 L7.2 0.8" fill="none" stroke="#e8e9ee" stroke-width="1.4"/></svg></span><span class="inf">Hol</span><svg class="av" viewBox="0 0 16 17" width="16" height="17"><circle cx="8" cy="8.5" r="7.8" fill="#252a3f" stroke="#343a52" stroke-width=".5"/><path d="M3.2 16 C3.6 14.2 5.4 13.6 8 13.6 C10.6 13.6 12.4 14.2 12.8 16 C11.500 16.700 9.800 17 8 17 C6.200 17 4.500 16.700 3.200 16 Z" fill="#1b1d26"/><path d="M6.200 11 H9.800 V14.600 C9 15.400 7 15.400 6.200 14.600 Z" fill="#4e3224"/><ellipse cx="8" cy="8.800" rx="4.100" ry="5.200" fill="#6f4a35"/><path d="M4.300 10.500 C5 13 6.500 14 8 14 C9.500 14 11 13 11.700 10.500 C10.800 12 9.500 12.600 8 12.600 C6.500 12.600 5.200 12 4.300 10.500 Z" fill="#4e3224"/><path d="M3.700 8 C3.300 3.600 5.400 2 8 2 C10.600 2 12.700 3.600 12.300 8 C11.800 5.800 10.600 5.200 8 5.200 C5.400 5.200 4.200 5.800 3.700 8 Z" fill="#17100c"/><path d="M5.700 8.300 h1.500 M8.800 8.300 h1.500" stroke="#17100c" stroke-width=".7"/><path d="M6.800 11.400 Q8 12.100 9.200 11.400" fill="none" stroke="#4e3224" stroke-width=".6"/></svg><svg class="pico" viewBox="0 0 10 8" width="8.400" height="6.700"><path d="M5 .2 A4.800 4.800 0 0 1 9.800 5 C9.800 6.200 9.500 7 9 7.800 C8.400 6.300 7 5.600 5 5.600 C3 5.600 1.600 6.300 1 7.800 C.5 7 .2 6.200 .2 5 A4.800 4.800 0 0 1 5 .2 Z" fill="#cdd0e2"/><circle cx="5" cy="3.400" r="1.600" fill="#141828"/></svg><span class="pname" style="color:#e8e9ee">Mike Trésor</span><span class="pos">AM (LC)</span><span class="conbox"><svg viewBox="0 0 14 13" width="11" height="10.2"><path d="M7 12 C3.2 9.2 0.7 6.8 0.7 4 C0.7 2 2.2 0.7 3.9 0.7 C5.2 0.7 6.3 1.4 7 2.5 C7.7 1.4 8.8 0.7 10.1 0.7 C11.8 0.7 13.3 2 13.3 4 C13.3 6.8 10.8 9.2 7 12 Z" fill="#1fd071"/><path d="M1.2 6.2 L4.4 6.2 L5.6 4.6 L7.4 8 L8.8 6.2 L12.8 6.2" fill="none" stroke="#0f2a22" stroke-width="1.5" stroke-linejoin="round"/></svg></span><span class="shp" style="background:#ec5552"><svg viewBox="0 0 10 10"><path d="M2.8 2.8 L7.2 7.2 M7.2 2.8 L2.8 7.2" fill="none" stroke="#5c1016" stroke-width="1.5"/></svg></span><svg class="mor" viewBox="0 0 12 12" width="10.5" height="10.5"><circle cx="6" cy="6" r="5.6" fill="#efd545"/><path d="M3.500 3.900 L8.900 6 L3.500 8.100 L4.900 6 Z" fill="#4b3208" transform="rotate(-8 6 6)"/></svg><svg class="face" viewBox="0 0 12 12" width="10.7" height="10.7"><circle cx="6" cy="6" r="5.7" fill="#b44df0"/><circle cx="4.100" cy="4.500" r=".95" fill="#2a1a08"/><circle cx="7.900" cy="4.500" r=".95" fill="#2a1a08"/><path d="M3.9 8.4 Q6 6.8 8.1 8.4" fill="none" stroke="#2a1a08" stroke-width="1"/></svg><span class="hap">Satisfied</span><span class="formbox"><i style="left:7.0px;top:3.1px;width:10.2px;height:10.0px;background:#679a12;box-shadow:inset 0 0 0 1px #8db63a"></i><i style="left:21.1px;top:3.9px;width:10.2px;height:9.2px;background:#b8a43c;box-shadow:inset 0 0 0 1px #cbbd62"></i><i style="left:35.7px;top:3.9px;width:10.2px;height:9.2px;background:#b8a43c;box-shadow:inset 0 0 0 1px #cbbd62"></i><i style="left:49.7px;top:3.9px;width:10.2px;height:9.2px;background:#b8a43c;box-shadow:inset 0 0 0 1px #cbbd62"></i><i style="left:63.6px;top:3.1px;width:10.2px;height:10.0px;background:#679a12;box-shadow:inset 0 0 0 1px #8db63a"></i></span><span class="apps">5 (17)</span><span class="gls">2</span><span class="ast">5</span><span class="avg ">6.79</span></div>
<div class="row alt" style="top:495.15px"><span class="cb"></span><span class="pick"><span class="pd">-</span><svg class="chev" viewBox="0 0 8 5" width="7.4" height="4.6"><path d="M0.8 0.8 L4 4 L7.2 0.8" fill="none" stroke="#e8e9ee" stroke-width="1.4"/></svg></span><span class="inf">Hol</span><svg class="av" viewBox="0 0 16 17" width="16" height="17"><circle cx="8" cy="8.5" r="7.8" fill="#252a3f" stroke="#343a52" stroke-width=".5"/><path d="M8 2.2 C10.6 2.2 11.6 4.2 11.4 6.6 C11.2 9 10.4 10.6 10 11.6 C10.2 12.8 11.4 13.6 12.8 14.4 L11 16.6 L5 16.6 L3.2 14.4 C4.600 13.6 5.800 12.800 6 11.600 C5.600 10.600 4.800 9 4.600 6.600 C4.400 4.200 5.400 2.200 8 2.200 Z" fill="#020203"/></svg><svg class="pico" viewBox="0 0 10 8" width="8.400" height="6.700"><path d="M5 .2 A4.800 4.800 0 0 1 9.800 5 C9.800 6.200 9.500 7 9 7.800 C8.400 6.300 7 5.600 5 5.600 C3 5.600 1.600 6.300 1 7.800 C.5 7 .2 6.200 .2 5 A4.800 4.800 0 0 1 5 .2 Z" fill="#cdd0e2"/><circle cx="5" cy="3.400" r="1.600" fill="#141828"/></svg><span class="pname" style="color:#e8e9ee">Lesley Ugochukwu</span><span class="pos">DM, M (C)</span><span class="conbox"><svg viewBox="0 0 14 13" width="11" height="10.2"><path d="M7 12 C3.2 9.2 0.7 6.8 0.7 4 C0.7 2 2.2 0.7 3.9 0.7 C5.2 0.7 6.3 1.4 7 2.5 C7.7 1.4 8.8 0.7 10.1 0.7 C11.8 0.7 13.3 2 13.3 4 C13.3 6.8 10.8 9.2 7 12 Z" fill="#1fd071"/><path d="M1.2 6.2 L4.4 6.2 L5.6 4.6 L7.4 8 L8.8 6.2 L12.8 6.2" fill="none" stroke="#0f2a22" stroke-width="1.5" stroke-linejoin="round"/></svg></span><span class="shp" style="background:#ec5552"><svg viewBox="0 0 10 10"><path d="M2.8 2.8 L7.2 7.2 M7.2 2.8 L2.8 7.2" fill="none" stroke="#5c1016" stroke-width="1.5"/></svg></span><svg class="mor" viewBox="0 0 12 12" width="10.5" height="10.5"><circle cx="6" cy="6" r="5.6" fill="#efd545"/><path d="M3.500 3.900 L8.900 6 L3.500 8.100 L4.900 6 Z" fill="#4b3208" transform="rotate(-8 6 6)"/></svg><svg class="face" viewBox="0 0 12 12" width="10.7" height="10.7"><circle cx="6" cy="6" r="5.7" fill="#f5863d"/><circle cx="4.100" cy="4.500" r=".95" fill="#2a1a08"/><circle cx="7.900" cy="4.500" r=".95" fill="#2a1a08"/><path d="M3.9 7.9 L8.1 7.9" fill="none" stroke="#2a1a08" stroke-width="1"/></svg><span class="hap">Concerned</span><span class="formbox"><i style="left:7.0px;top:3.9px;width:10.2px;height:9.2px;background:#b8a43c;box-shadow:inset 0 0 0 1px #cbbd62"></i><i style="left:21.1px;top:3.9px;width:10.2px;height:9.2px;background:#b8a43c;box-shadow:inset 0 0 0 1px #cbbd62"></i><i style="left:35.7px;top:3.9px;width:10.2px;height:9.2px;background:#b8a43c;box-shadow:inset 0 0 0 1px #cbbd62"></i><i style="left:49.7px;top:3.9px;width:10.2px;height:9.2px;background:#b8a43c;box-shadow:inset 0 0 0 1px #cbbd62"></i></span><span class="apps">3 (5)</span><span class="gls">2</span><span class="ast">0</span><span class="avg ">6.65</span></div>
<div class="row" style="top:515.06px"><span class="cb"></span><span class="pick"><span class="pd">-</span><svg class="chev" viewBox="0 0 8 5" width="7.4" height="4.6"><path d="M0.8 0.8 L4 4 L7.2 0.8" fill="none" stroke="#e8e9ee" stroke-width="1.4"/></svg></span><span class="inf">Hol</span><svg class="av" viewBox="0 0 16 17" width="16" height="17"><circle cx="8" cy="8.5" r="7.8" fill="#252a3f" stroke="#343a52" stroke-width=".5"/><path d="M3.2 16 C3.6 14.2 5.4 13.6 8 13.6 C10.6 13.6 12.4 14.2 12.8 16 C11.500 16.700 9.800 17 8 17 C6.200 17 4.500 16.700 3.200 16 Z" fill="#1b1d26"/><path d="M6.200 11 H9.800 V14.600 C9 15.400 7 15.400 6.200 14.600 Z" fill="#4e3224"/><ellipse cx="8" cy="8.800" rx="4.100" ry="5.200" fill="#6f4a35"/><path d="M4.300 10.500 C5 13 6.500 14 8 14 C9.500 14 11 13 11.700 10.500 C10.800 12 9.500 12.600 8 12.600 C6.500 12.600 5.200 12 4.300 10.500 Z" fill="#4e3224"/><path d="M3.700 8 C3.300 3.600 5.400 2 8 2 C10.600 2 12.700 3.600 12.300 8 C11.800 5.800 10.600 5.200 8 5.200 C5.400 5.200 4.200 5.800 3.700 8 Z" fill="#17100c"/><path d="M5.700 8.300 h1.500 M8.800 8.300 h1.500" stroke="#17100c" stroke-width=".7"/><path d="M6.800 11.400 Q8 12.100 9.200 11.400" fill="none" stroke="#4e3224" stroke-width=".6"/></svg><svg class="pico" viewBox="0 0 10 8" width="8.400" height="6.700"><path d="M5 .2 A4.800 4.800 0 0 1 9.800 5 C9.800 6.200 9.500 7 9 7.800 C8.400 6.300 7 5.600 5 5.600 C3 5.600 1.600 6.300 1 7.800 C.5 7 .2 6.200 .2 5 A4.800 4.800 0 0 1 5 .2 Z" fill="#cdd0e2"/><circle cx="5" cy="3.400" r="1.600" fill="#141828"/></svg><span class="pname" style="color:#e8e9ee">Bashir Humphreys</span><span class="pos">D (LC)</span><span class="conbox"><svg viewBox="0 0 14 13" width="11" height="10.2"><path d="M7 12 C3.2 9.2 0.7 6.8 0.7 4 C0.7 2 2.2 0.7 3.9 0.7 C5.2 0.7 6.3 1.4 7 2.5 C7.7 1.4 8.8 0.7 10.1 0.7 C11.8 0.7 13.3 2 13.3 4 C13.3 6.8 10.8 9.2 7 12 Z" fill="#1fd071"/><path d="M1.2 6.2 L4.4 6.2 L5.6 4.6 L7.4 8 L8.8 6.2 L12.8 6.2" fill="none" stroke="#0f2a22" stroke-width="1.5" stroke-linejoin="round"/></svg></span><span class="shp" style="background:#1fc163"><svg viewBox="0 0 10 10"><path d="M2.2 5.3 L4.2 7.2 L7.8 2.9" fill="none" stroke="#0d3a22" stroke-width="1.6"/></svg></span><svg class="mor" viewBox="0 0 12 12" width="10.5" height="10.5"><circle cx="6" cy="6" r="5.6" fill="#efd545"/><path d="M3.500 3.900 L8.900 6 L3.500 8.100 L4.900 6 Z" fill="#4b3208" transform="rotate(-8 6 6)"/></svg><svg class="face" viewBox="0 0 12 12" width="10.7" height="10.7"><circle cx="6" cy="6" r="5.7" fill="#2acb72"/><circle cx="4.100" cy="4.500" r=".95" fill="#2a1a08"/><circle cx="7.900" cy="4.500" r=".95" fill="#2a1a08"/><path d="M3.2 6.4 Q6 10.6 8.8 6.4 Z" fill="#2a1a08"/></svg><span class="hap">Delighted</span><span class="formbox"><i style="left:7.0px;top:3.9px;width:10.2px;height:9.2px;background:#b8a43c;box-shadow:inset 0 0 0 1px #cbbd62"></i><i style="left:21.1px;top:3.9px;width:10.2px;height:9.2px;background:#b8a43c;box-shadow:inset 0 0 0 1px #cbbd62"></i><i style="left:35.7px;top:3.9px;width:10.2px;height:9.2px;background:#b8a43c;box-shadow:inset 0 0 0 1px #cbbd62"></i><i style="left:49.7px;top:3.9px;width:10.2px;height:9.2px;background:#b8a43c;box-shadow:inset 0 0 0 1px #cbbd62"></i><i style="left:63.6px;top:3.9px;width:10.2px;height:9.2px;background:#b8a43c;box-shadow:inset 0 0 0 1px #cbbd62"></i></span><span class="apps">34 (3)</span><span class="gls">2</span><span class="ast">3</span><span class="avg ">6.81</span></div>
<div class="row alt" style="top:534.97px"><span class="cb"></span><span class="pick"><span class="pd">-</span><svg class="chev" viewBox="0 0 8 5" width="7.4" height="4.6"><path d="M0.8 0.8 L4 4 L7.2 0.8" fill="none" stroke="#e8e9ee" stroke-width="1.4"/></svg></span><span class="inf">Trv</span><svg class="av" viewBox="0 0 16 17" width="16" height="17"><circle cx="8" cy="8.5" r="7.8" fill="#252a3f" stroke="#343a52" stroke-width=".5"/><path d="M3.2 16 C3.6 14.2 5.4 13.6 8 13.6 C10.6 13.6 12.4 14.2 12.8 16 C11.500 16.700 9.800 17 8 17 C6.200 17 4.500 16.700 3.200 16 Z" fill="#1b1d26"/><path d="M6.200 11 H9.800 V14.600 C9 15.400 7 15.400 6.200 14.600 Z" fill="#4e3224"/><ellipse cx="8" cy="8.800" rx="4.100" ry="5.200" fill="#6f4a35"/><path d="M4.300 10.500 C5 13 6.500 14 8 14 C9.500 14 11 13 11.700 10.500 C10.800 12 9.500 12.600 8 12.600 C6.500 12.600 5.200 12 4.300 10.500 Z" fill="#4e3224"/><path d="M3.700 8 C3.300 3.600 5.400 2 8 2 C10.600 2 12.700 3.600 12.300 8 C11.800 5.800 10.600 5.200 8 5.200 C5.400 5.200 4.200 5.800 3.700 8 Z" fill="#17100c"/><path d="M5.700 8.300 h1.500 M8.800 8.300 h1.500" stroke="#17100c" stroke-width=".7"/><path d="M6.800 11.400 Q8 12.100 9.200 11.400" fill="none" stroke="#4e3224" stroke-width=".6"/></svg><svg class="pico" viewBox="0 0 10 8" width="8.400" height="6.700"><path d="M5 .2 A4.800 4.800 0 0 1 9.800 5 C9.800 6.200 9.500 7 9 7.800 C8.400 6.300 7 5.600 5 5.600 C3 5.600 1.600 6.300 1 7.800 C.5 7 .2 6.200 .2 5 A4.800 4.800 0 0 1 5 .2 Z" fill="#cdd0e2"/><circle cx="5" cy="3.400" r="1.600" fill="#141828"/></svg><span class="pname" style="color:#e0628a">Shurandy Sambo</span><span class="pos">D (RC), WB (R)</span><span class="conbox"><svg viewBox="0 0 14 13" width="11" height="10.2"><path d="M7 12 C3.2 9.2 0.7 6.8 0.7 4 C0.7 2 2.2 0.7 3.9 0.7 C5.2 0.7 6.3 1.4 7 2.5 C7.7 1.4 8.8 0.7 10.1 0.7 C11.8 0.7 13.3 2 13.3 4 C13.3 6.8 10.8 9.2 7 12 Z" fill="#1fd071"/><path d="M1.2 6.2 L4.4 6.2 L5.6 4.6 L7.4 8 L8.8 6.2 L12.8 6.2" fill="none" stroke="#0f2a22" stroke-width="1.5" stroke-linejoin="round"/></svg></span><span class="shp" style="background:#f2cb45"><svg viewBox="0 0 10 10"><path d="M1.500 5 L8.500 5" fill="none" stroke="#4e3a06" stroke-width="1.700"/></svg></span><svg class="mor" viewBox="0 0 12 12" width="10.5" height="10.5"><circle cx="6" cy="6" r="5.6" fill="#efd545"/><path d="M3.500 3.900 L8.900 6 L3.500 8.100 L4.900 6 Z" fill="#4b3208" transform="rotate(-8 6 6)"/></svg><span class="hap" style="left:648px">-</span><span class="formbox"><i style="left:7.0px;top:3.9px;width:10.2px;height:9.2px;background:#b8a43c;box-shadow:inset 0 0 0 1px #cbbd62"></i><i style="left:21.1px;top:3.1px;width:10.2px;height:10.0px;background:#679a12;box-shadow:inset 0 0 0 1px #8db63a"></i></span><span class="apps">29</span><span class="gls">1</span><span class="ast">0</span><span class="avg ">6.81</span></div>
<div class="row" style="top:554.88px"><span class="cb"></span><span class="pick"><span class="pd">-</span><svg class="chev" viewBox="0 0 8 5" width="7.4" height="4.6"><path d="M0.8 0.8 L4 4 L7.2 0.8" fill="none" stroke="#e8e9ee" stroke-width="1.4"/></svg></span><span class="inf">Trv</span><svg class="av" viewBox="0 0 16 17" width="16" height="17"><circle cx="8" cy="8.5" r="7.8" fill="#252a3f" stroke="#343a52" stroke-width=".5"/><path d="M3.2 16 C3.6 14.2 5.4 13.6 8 13.6 C10.6 13.6 12.4 14.2 12.8 16 C11.500 16.700 9.800 17 8 17 C6.200 17 4.500 16.700 3.200 16 Z" fill="#1b1d26"/><path d="M6.200 11 H9.800 V14.600 C9 15.400 7 15.400 6.200 14.600 Z" fill="#2e1e17"/><ellipse cx="8" cy="8.800" rx="4.100" ry="5.200" fill="#4a3226"/><path d="M4.300 10.500 C5 13 6.500 14 8 14 C9.500 14 11 13 11.700 10.500 C10.800 12 9.500 12.600 8 12.600 C6.500 12.600 5.200 12 4.300 10.500 Z" fill="#2e1e17"/><path d="M3.700 8 C3.300 3.600 5.400 2 8 2 C10.600 2 12.700 3.600 12.300 8 C11.800 5.800 10.600 5.200 8 5.200 C5.400 5.200 4.200 5.800 3.700 8 Z" fill="#0d0a08"/><path d="M5.700 8.300 h1.500 M8.800 8.300 h1.500" stroke="#0d0a08" stroke-width=".7"/><path d="M6.800 11.400 Q8 12.100 9.200 11.400" fill="none" stroke="#2e1e17" stroke-width=".6"/></svg><svg class="pico" viewBox="0 0 10 8" width="8.400" height="6.700"><path d="M5 .2 A4.800 4.800 0 0 1 9.800 5 C9.800 6.200 9.500 7 9 7.800 C8.400 6.300 7 5.600 5 5.600 C3 5.600 1.600 6.300 1 7.800 C.5 7 .2 6.200 .2 5 A4.800 4.800 0 0 1 5 .2 Z" fill="#cdd0e2"/><circle cx="5" cy="3.400" r="1.600" fill="#141828"/></svg><span class="pname" style="color:#e8e9ee">Axel Tuanzebe</span><span class="pos">D (RC)</span><span class="conbox"><svg viewBox="0 0 14 13" width="11" height="10.2"><path d="M7 12 C3.2 9.2 0.7 6.8 0.7 4 C0.7 2 2.2 0.7 3.9 0.7 C5.2 0.7 6.3 1.4 7 2.5 C7.7 1.4 8.8 0.7 10.1 0.7 C11.8 0.7 13.3 2 13.3 4 C13.3 6.8 10.8 9.2 7 12 Z" fill="#1fd071"/><path d="M1.2 6.2 L4.4 6.2 L5.6 4.6 L7.4 8 L8.8 6.2 L12.8 6.2" fill="none" stroke="#0f2a22" stroke-width="1.5" stroke-linejoin="round"/></svg></span><span class="shp" style="background:#f79a45"><svg viewBox="0 0 10 10"><path d="M2.4 3.8 L5 6.3 L7.6 3.8" fill="none" stroke="#5a2c08" stroke-width="1.6"/></svg></span><svg class="mor" viewBox="0 0 12 12" width="10.5" height="10.5"><circle cx="6" cy="6" r="5.6" fill="#efd545"/><path d="M3.500 3.900 L8.900 6 L3.500 8.100 L4.900 6 Z" fill="#4b3208" transform="rotate(-8 6 6)"/></svg><svg class="face" viewBox="0 0 12 12" width="10.7" height="10.7"><circle cx="6" cy="6" r="5.7" fill="#b44df0"/><circle cx="4.100" cy="4.500" r=".95" fill="#2a1a08"/><circle cx="7.900" cy="4.500" r=".95" fill="#2a1a08"/><path d="M3.9 8.4 Q6 6.8 8.1 8.4" fill="none" stroke="#2a1a08" stroke-width="1"/></svg><span class="hap">Satisfied</span><span class="formbox"><i style="left:7.0px;top:3.9px;width:10.2px;height:9.2px;background:#b8a43c;box-shadow:inset 0 0 0 1px #cbbd62"></i><i style="left:21.1px;top:3.9px;width:10.2px;height:9.2px;background:#b8a43c;box-shadow:inset 0 0 0 1px #cbbd62"></i><i style="left:35.7px;top:3.9px;width:10.2px;height:9.2px;background:#b8a43c;box-shadow:inset 0 0 0 1px #cbbd62"></i><i style="left:49.7px;top:3.9px;width:10.2px;height:9.2px;background:#b8a43c;box-shadow:inset 0 0 0 1px #cbbd62"></i><i style="left:63.6px;top:3.9px;width:10.2px;height:9.2px;background:#b8a43c;box-shadow:inset 0 0 0 1px #cbbd62"></i></span><span class="apps">20 (12)</span><span class="gls">1</span><span class="ast">0</span><span class="avg ">6.72</span></div>
<div class="row alt" style="top:574.79px"><span class="cb"></span><span class="pick"><span class="pd">-</span><svg class="chev" viewBox="0 0 8 5" width="7.4" height="4.6"><path d="M0.8 0.8 L4 4 L7.2 0.8" fill="none" stroke="#e8e9ee" stroke-width="1.4"/></svg></span><span class="inf">Int</span><svg class="av" viewBox="0 0 16 17" width="16" height="17"><circle cx="8" cy="8.5" r="7.8" fill="#252a3f" stroke="#343a52" stroke-width=".5"/><path d="M3.2 16 C3.6 14.2 5.4 13.6 8 13.6 C10.6 13.6 12.4 14.2 12.8 16 C11.500 16.700 9.800 17 8 17 C6.200 17 4.500 16.700 3.200 16 Z" fill="#1b1d26"/><path d="M6.200 11 H9.800 V14.600 C9 15.400 7 15.400 6.200 14.600 Z" fill="#a97f68"/><ellipse cx="8" cy="8.800" rx="4.100" ry="5.200" fill="#d8ab8e"/><path d="M4.300 10.500 C5 13 6.500 14 8 14 C9.500 14 11 13 11.700 10.500 C10.800 12 9.500 12.600 8 12.600 C6.500 12.600 5.200 12 4.300 10.500 Z" fill="#a97f68"/><path d="M3.700 8 C3.300 3.600 5.400 2 8 2 C10.600 2 12.700 3.600 12.300 8 C11.800 5.800 10.600 5.200 8 5.200 C5.400 5.200 4.200 5.800 3.700 8 Z" fill="#4a3828"/><path d="M5.700 8.300 h1.500 M8.800 8.300 h1.500" stroke="#4a3828" stroke-width=".7"/><path d="M6.800 11.400 Q8 12.100 9.200 11.400" fill="none" stroke="#a97f68" stroke-width=".6"/></svg><svg class="pico" viewBox="0 0 10 8" width="8.400" height="6.700"><path d="M5 .2 A4.800 4.800 0 0 1 9.800 5 C9.800 6.200 9.500 7 9 7.800 C8.400 6.300 7 5.600 5 5.600 C3 5.600 1.600 6.300 1 7.800 C.5 7 .2 6.200 .2 5 A4.800 4.800 0 0 1 5 .2 Z" fill="#cdd0e2"/><circle cx="5" cy="3.400" r="1.600" fill="#141828"/></svg><span class="pname" style="color:#e8e9ee">Hjalmar Ekdal</span><span class="pos">D (C)</span><span class="conbox"><svg viewBox="0 0 14 13" width="11" height="10.2"><path d="M7 12 C3.2 9.2 0.7 6.8 0.7 4 C0.7 2 2.2 0.7 3.9 0.7 C5.2 0.7 6.3 1.4 7 2.5 C7.7 1.4 8.8 0.7 10.1 0.7 C11.8 0.7 13.3 2 13.3 4 C13.3 6.8 10.8 9.2 7 12 Z" fill="#1fd071"/><path d="M1.2 6.2 L4.4 6.2 L5.6 4.6 L7.4 8 L8.8 6.2 L12.8 6.2" fill="none" stroke="#0f2a22" stroke-width="1.5" stroke-linejoin="round"/></svg></span><span class="shp" style="background:#ec5552"><svg viewBox="0 0 10 10"><path d="M2.8 2.8 L7.2 7.2 M7.2 2.8 L2.8 7.2" fill="none" stroke="#5c1016" stroke-width="1.5"/></svg></span><svg class="mor" viewBox="0 0 12 12" width="10.5" height="10.5"><circle cx="6" cy="6" r="5.6" fill="#efd545"/><path d="M3.500 3.900 L8.900 6 L3.500 8.100 L4.900 6 Z" fill="#4b3208" transform="rotate(-8 6 6)"/></svg><svg class="face" viewBox="0 0 12 12" width="10.7" height="10.7"><circle cx="6" cy="6" r="5.7" fill="#f5863d"/><circle cx="4.100" cy="4.500" r=".95" fill="#2a1a08"/><circle cx="7.900" cy="4.500" r=".95" fill="#2a1a08"/><path d="M3.9 7.9 L8.1 7.9" fill="none" stroke="#2a1a08" stroke-width="1"/></svg><span class="hap">Concerned</span><span class="formbox"><i style="left:7.0px;top:3.1px;width:10.2px;height:10.0px;background:#679a12;box-shadow:inset 0 0 0 1px #8db63a"></i><i style="left:21.1px;top:3.1px;width:10.2px;height:10.0px;background:#679a12;box-shadow:inset 0 0 0 1px #8db63a"></i><i style="left:35.7px;top:3.9px;width:10.2px;height:9.2px;background:#b8a43c;box-shadow:inset 0 0 0 1px #cbbd62"></i><i style="left:49.7px;top:3.9px;width:10.2px;height:9.2px;background:#b8a43c;box-shadow:inset 0 0 0 1px #cbbd62"></i></span><span class="apps">8 (3)</span><span class="gls">1</span><span class="ast">0</span><span class="avg ">6.88</span></div>
<div class="row" style="top:594.70px"><span class="cb"></span><span class="pick"><span class="pd">-</span><svg class="chev" viewBox="0 0 8 5" width="7.4" height="4.6"><path d="M0.8 0.8 L4 4 L7.2 0.8" fill="none" stroke="#e8e9ee" stroke-width="1.4"/></svg></span><svg class="av" viewBox="0 0 16 17" width="16" height="17"><circle cx="8" cy="8.5" r="7.8" fill="#252a3f" stroke="#343a52" stroke-width=".5"/><path d="M3.2 16 C3.6 14.2 5.4 13.6 8 13.6 C10.6 13.6 12.4 14.2 12.8 16 C11.500 16.700 9.800 17 8 17 C6.200 17 4.500 16.700 3.200 16 Z" fill="#1b1d26"/><path d="M6.200 11 H9.800 V14.600 C9 15.400 7 15.400 6.200 14.600 Z" fill="#5e4233"/><ellipse cx="8" cy="8.800" rx="4.100" ry="5.200" fill="#85604a"/><path d="M4.300 10.500 C5 13 6.500 14 8 14 C9.500 14 11 13 11.700 10.500 C10.800 12 9.500 12.600 8 12.600 C6.500 12.600 5.200 12 4.300 10.500 Z" fill="#5e4233"/><path d="M3.700 8 C3.300 3.600 5.400 2 8 2 C10.600 2 12.700 3.600 12.300 8 C11.800 5.800 10.600 5.200 8 5.200 C5.400 5.200 4.200 5.800 3.700 8 Z" fill="#15100c"/><path d="M5.700 8.300 h1.500 M8.800 8.300 h1.500" stroke="#15100c" stroke-width=".7"/><path d="M6.800 11.400 Q8 12.100 9.200 11.400" fill="none" stroke="#5e4233" stroke-width=".6"/></svg><svg class="pico" viewBox="0 0 10 8" width="8.400" height="6.700"><path d="M5 .2 A4.800 4.800 0 0 1 9.800 5 C9.800 6.200 9.500 7 9 7.800 C8.400 6.300 7 5.600 5 5.600 C3 5.600 1.600 6.300 1 7.800 C.5 7 .2 6.200 .2 5 A4.800 4.800 0 0 1 5 .2 Z" fill="#cdd0e2"/><circle cx="5" cy="3.400" r="1.600" fill="#141828"/></svg><span class="pname" style="color:#e0628a">Michael Obafemi</span><span class="pos">AM (L), ST (C)</span><span class="conbox"><svg viewBox="0 0 14 13" width="11" height="10.2"><path d="M7 12 C3.2 9.2 0.7 6.8 0.7 4 C0.7 2 2.2 0.7 3.9 0.7 C5.2 0.7 6.3 1.4 7 2.5 C7.7 1.4 8.8 0.7 10.1 0.7 C11.8 0.7 13.3 2 13.3 4 C13.3 6.8 10.8 9.2 7 12 Z" fill="#1fd071"/><path d="M1.2 6.2 L4.4 6.2 L5.6 4.6 L7.4 8 L8.8 6.2 L12.8 6.2" fill="none" stroke="#0f2a22" stroke-width="1.5" stroke-linejoin="round"/></svg></span><span class="shp" style="background:#f2cb45"><svg viewBox="0 0 10 10"><path d="M1.500 5 L8.500 5" fill="none" stroke="#4e3a06" stroke-width="1.700"/></svg></span><svg class="mor" viewBox="0 0 12 12" width="10.5" height="10.5"><circle cx="6" cy="6" r="5.6" fill="#efd545"/><path d="M3.500 3.900 L8.900 6 L3.500 8.100 L4.900 6 Z" fill="#4b3208" transform="rotate(-8 6 6)"/></svg><span class="hap" style="left:648px">-</span><span class="formbox"><i style="left:7.0px;top:3.9px;width:10.2px;height:9.2px;background:#b8a43c;box-shadow:inset 0 0 0 1px #cbbd62"></i></span><span class="apps">24</span><span class="gls">1</span><span class="ast">0</span><span class="avg ">6.84</span></div>
<div class="row alt" style="top:614.61px"><span class="cb"></span><span class="pick"><span class="pd">-</span><svg class="chev" viewBox="0 0 8 5" width="7.4" height="4.6"><path d="M0.8 0.8 L4 4 L7.2 0.8" fill="none" stroke="#e8e9ee" stroke-width="1.4"/></svg></span><span class="inf">Hol</span><svg class="av" viewBox="0 0 16 17" width="16" height="17"><circle cx="8" cy="8.5" r="7.8" fill="#252a3f" stroke="#343a52" stroke-width=".5"/><path d="M3.2 16 C3.6 14.2 5.4 13.6 8 13.6 C10.6 13.6 12.4 14.2 12.8 16 C11.500 16.700 9.800 17 8 17 C6.200 17 4.500 16.700 3.200 16 Z" fill="#1b1d26"/><path d="M6.200 11 H9.800 V14.600 C9 15.400 7 15.400 6.200 14.600 Z" fill="#a97f68"/><ellipse cx="8" cy="8.800" rx="4.100" ry="5.200" fill="#d8ab8e"/><path d="M4.300 10.500 C5 13 6.500 14 8 14 C9.500 14 11 13 11.700 10.500 C10.800 12 9.500 12.600 8 12.600 C6.500 12.600 5.200 12 4.300 10.500 Z" fill="#a97f68"/><path d="M3.700 8 C3.300 3.600 5.400 2 8 2 C10.600 2 12.700 3.600 12.300 8 C11.800 5.800 10.600 5.200 8 5.200 C5.400 5.200 4.200 5.800 3.700 8 Z" fill="#4a3828"/><path d="M5.700 8.300 h1.500 M8.800 8.300 h1.500" stroke="#4a3828" stroke-width=".7"/><path d="M6.800 11.400 Q8 12.100 9.200 11.400" fill="none" stroke="#a97f68" stroke-width=".6"/></svg><svg class="pico" viewBox="0 0 10 8" width="8.400" height="6.700"><path d="M5 .2 A4.800 4.800 0 0 1 9.800 5 C9.800 6.200 9.500 7 9 7.800 C8.400 6.300 7 5.600 5 5.600 C3 5.600 1.600 6.300 1 7.800 C.5 7 .2 6.200 .2 5 A4.800 4.800 0 0 1 5 .2 Z" fill="#cdd0e2"/><circle cx="5" cy="3.400" r="1.600" fill="#141828"/></svg><span class="pname" style="color:#e8e9ee">Maxime Estève</span><span class="pos">D (C)</span><span class="conbox"><svg viewBox="0 0 14 13" width="11" height="10.2"><path d="M7 12 C3.2 9.2 0.7 6.8 0.7 4 C0.7 2 2.2 0.7 3.9 0.7 C5.2 0.7 6.3 1.4 7 2.5 C7.7 1.4 8.8 0.7 10.1 0.7 C11.8 0.7 13.3 2 13.3 4 C13.3 6.8 10.8 9.2 7 12 Z" fill="#1fd071"/><path d="M1.2 6.2 L4.4 6.2 L5.6 4.6 L7.4 8 L8.8 6.2 L12.8 6.2" fill="none" stroke="#0f2a22" stroke-width="1.5" stroke-linejoin="round"/></svg></span><span class="shp" style="background:#1fc163"><svg viewBox="0 0 10 10"><path d="M2.2 5.3 L4.2 7.2 L7.8 2.9" fill="none" stroke="#0d3a22" stroke-width="1.6"/></svg></span><svg class="mor" viewBox="0 0 12 12" width="10.5" height="10.5"><circle cx="6" cy="6" r="5.6" fill="#efd545"/><path d="M3.500 3.900 L8.900 6 L3.500 8.100 L4.900 6 Z" fill="#4b3208" transform="rotate(-8 6 6)"/></svg><svg class="face" viewBox="0 0 12 12" width="10.7" height="10.7"><circle cx="6" cy="6" r="5.7" fill="#2acb72"/><circle cx="4.100" cy="4.500" r=".95" fill="#2a1a08"/><circle cx="7.900" cy="4.500" r=".95" fill="#2a1a08"/><path d="M3.2 6.4 Q6 10.6 8.8 6.4 Z" fill="#2a1a08"/></svg><span class="hap">Delighted</span><span class="formbox"><i style="left:7.0px;top:3.9px;width:10.2px;height:9.2px;background:#b8a43c;box-shadow:inset 0 0 0 1px #cbbd62"></i><i style="left:21.1px;top:3.9px;width:10.2px;height:9.2px;background:#b8a43c;box-shadow:inset 0 0 0 1px #cbbd62"></i><i style="left:35.7px;top:3.9px;width:10.2px;height:9.2px;background:#b8a43c;box-shadow:inset 0 0 0 1px #cbbd62"></i><i style="left:49.7px;top:3.9px;width:10.2px;height:9.2px;background:#b8a43c;box-shadow:inset 0 0 0 1px #cbbd62"></i><i style="left:63.6px;top:3.9px;width:10.2px;height:9.2px;background:#b8a43c;box-shadow:inset 0 0 0 1px #cbbd62"></i></span><span class="apps">39</span><span class="gls">1</span><span class="ast">3</span><span class="avg ">6.77</span></div>
<div class="row" style="top:634.52px"><span class="cb"></span><span class="pick"><span class="pd">-</span><svg class="chev" viewBox="0 0 8 5" width="7.4" height="4.6"><path d="M0.8 0.8 L4 4 L7.2 0.8" fill="none" stroke="#e8e9ee" stroke-width="1.4"/></svg></span><span class="inf">Hol</span><svg class="av" viewBox="0 0 16 17" width="16" height="17"><circle cx="8" cy="8.5" r="7.8" fill="#252a3f" stroke="#343a52" stroke-width=".5"/><path d="M3.2 16 C3.6 14.2 5.4 13.6 8 13.6 C10.6 13.6 12.4 14.2 12.8 16 C11.500 16.700 9.800 17 8 17 C6.200 17 4.500 16.700 3.200 16 Z" fill="#1b1d26"/><path d="M6.200 11 H9.800 V14.600 C9 15.400 7 15.400 6.200 14.600 Z" fill="#a97f68"/><ellipse cx="8" cy="8.800" rx="4.100" ry="5.200" fill="#d8ab8e"/><path d="M4.300 10.500 C5 13 6.500 14 8 14 C9.500 14 11 13 11.700 10.500 C10.800 12 9.500 12.600 8 12.600 C6.500 12.600 5.200 12 4.300 10.500 Z" fill="#a97f68"/><path d="M3.700 8 C3.300 3.600 5.400 2 8 2 C10.600 2 12.700 3.600 12.300 8 C11.800 5.800 10.600 5.200 8 5.200 C5.400 5.200 4.200 5.800 3.700 8 Z" fill="#4a3828"/><path d="M5.700 8.300 h1.500 M8.800 8.300 h1.500" stroke="#4a3828" stroke-width=".7"/><path d="M6.800 11.400 Q8 12.100 9.200 11.400" fill="none" stroke="#a97f68" stroke-width=".6"/></svg><svg class="pico" viewBox="0 0 10 8" width="8.400" height="6.700"><path d="M5 .2 A4.800 4.800 0 0 1 9.800 5 C9.800 6.200 9.500 7 9 7.800 C8.400 6.300 7 5.600 5 5.600 C3 5.600 1.600 6.300 1 7.800 C.5 7 .2 6.200 .2 5 A4.800 4.800 0 0 1 5 .2 Z" fill="#cdd0e2"/><circle cx="5" cy="3.400" r="1.600" fill="#141828"/></svg><span class="pname" style="color:#e8e9ee">Connor Roberts</span><span class="pos">D/WB (R)</span><span class="conbox"><svg viewBox="0 0 14 13" width="11" height="10.2"><path d="M7 12 C3.2 9.2 0.7 6.8 0.7 4 C0.7 2 2.2 0.7 3.9 0.7 C5.2 0.7 6.3 1.4 7 2.5 C7.7 1.4 8.8 0.7 10.1 0.7 C11.8 0.7 13.3 2 13.3 4 C13.3 6.8 10.8 9.2 7 12 Z" fill="#1fd071"/><path d="M1.2 6.2 L4.4 6.2 L5.6 4.6 L7.4 8 L8.8 6.2 L12.8 6.2" fill="none" stroke="#0f2a22" stroke-width="1.5" stroke-linejoin="round"/></svg></span><span class="shp" style="background:#f79a45"><svg viewBox="0 0 10 10"><path d="M2.4 3.8 L5 6.3 L7.6 3.8" fill="none" stroke="#5a2c08" stroke-width="1.6"/></svg></span><svg class="mor" viewBox="0 0 12 12" width="10.5" height="10.5"><circle cx="6" cy="6" r="5.6" fill="#efd545"/><path d="M3.500 3.900 L8.900 6 L3.500 8.100 L4.900 6 Z" fill="#4b3208" transform="rotate(-8 6 6)"/></svg><svg class="face" viewBox="0 0 12 12" width="10.7" height="10.7"><circle cx="6" cy="6" r="5.7" fill="#2acb72"/><circle cx="4.100" cy="4.500" r=".95" fill="#2a1a08"/><circle cx="7.900" cy="4.500" r=".95" fill="#2a1a08"/><path d="M3.2 6.4 Q6 10.6 8.8 6.4 Z" fill="#2a1a08"/></svg><span class="hap">Delighted</span><span class="formbox"><i style="left:7.0px;top:3.9px;width:10.2px;height:9.2px;background:#b8a43c;box-shadow:inset 0 0 0 1px #cbbd62"></i><i style="left:21.1px;top:3.9px;width:10.2px;height:9.2px;background:#b8a43c;box-shadow:inset 0 0 0 1px #cbbd62"></i><i style="left:35.7px;top:3.9px;width:10.2px;height:9.2px;background:#b8a43c;box-shadow:inset 0 0 0 1px #cbbd62"></i><i style="left:49.7px;top:3.9px;width:10.2px;height:9.2px;background:#b8a43c;box-shadow:inset 0 0 0 1px #cbbd62"></i><i style="left:63.6px;top:3.9px;width:10.2px;height:9.2px;background:#b8a43c;box-shadow:inset 0 0 0 1px #cbbd62"></i></span><span class="apps">27 (5)</span><span class="gls">1</span><span class="ast">2</span><span class="avg ">6.54</span></div>
<div class="row alt" style="top:655.50px"><span class="pick"></span><span class="inf"></span><svg class="av" viewBox="0 0 16 17" width="16" height="17"><circle cx="8" cy="8.5" r="7.8" fill="#252a3f" stroke="#343a52" stroke-width=".5"/><path d="M3.2 16 C3.6 14.2 5.4 13.6 8 13.6 C10.6 13.6 12.4 14.2 12.8 16 C11.500 16.700 9.800 17 8 17 C6.200 17 4.500 16.700 3.200 16 Z" fill="#1b1d26"/><path d="M6.200 11 H9.800 V14.600 C9 15.400 7 15.400 6.200 14.600 Z" fill="#a97f68"/><ellipse cx="8" cy="8.800" rx="4.100" ry="5.200" fill="#d8ab8e"/><path d="M4.300 10.500 C5 13 6.500 14 8 14 C9.500 14 11 13 11.700 10.500 C10.800 12 9.500 12.600 8 12.600 C6.500 12.600 5.200 12 4.300 10.500 Z" fill="#a97f68"/><path d="M3.700 8 C3.300 3.600 5.400 2 8 2 C10.600 2 12.700 3.600 12.300 8 C11.800 5.800 10.600 5.200 8 5.200 C5.400 5.200 4.200 5.800 3.700 8 Z" fill="#4a3828"/><path d="M5.700 8.300 h1.500 M8.800 8.300 h1.500" stroke="#4a3828" stroke-width=".7"/><path d="M6.800 11.400 Q8 12.100 9.200 11.400" fill="none" stroke="#a97f68" stroke-width=".6"/></svg></div>
</div>
<svg class="abs" style="left:0;top:0" width="42" height="688" viewBox="0 0 42 688" fill="none" stroke="#5a21c2"><path d="M20.0 365.6 H23.9 V377.4 H20.0" stroke-width="1.2" stroke-opacity="0.20"/><path d="M7.5 400.6 H12.3 V413.4 H7.5" stroke-width="1.3" stroke-opacity="0.30"/><path d="M-3.0 438.8 H0.8 V453.2 H-3.0" stroke-width="1.5" stroke-opacity="0.40"/><path d="M31.0 449.8 H37.0 V465.7 H31.0" stroke-width="1.6" stroke-opacity="0.42"/><path d="M19.0 486.4 H25.1 V502.1 H19.0" stroke-width="1.7" stroke-opacity="0.50"/><path d="M7.0 522.4 H13.1 V538.1 H7.0" stroke-width="1.8" stroke-opacity="0.60"/><path d="M-4.0 557.5 H1.1 V574.0 H-4.0" stroke-width="1.9" stroke-opacity="0.85"/><path d="M31.0 570.0 H37.8 V587.0 H31.0" stroke-width="1.9" stroke-opacity="0.72"/><path d="M19.0 606.5 H26.8 V624.5 H19.0" stroke-width="2.0" stroke-opacity="0.82"/><path d="M7.0 642.5 H14.9 V662.0 H7.0" stroke-width="2.1" stroke-opacity="0.92"/><path d="M-3.0 676.1 H2.9 V694.9 H-3.0" stroke-width="2.2" stroke-opacity="1.00"/></svg>
<span class="abs" style="left:1066px;top:626px;font-size:13.200px;line-height:15px;color:rgba(200,202,212,.62);white-space:nowrap">Activate Windows</span>
<span class="abs" style="left:1066px;top:642.500px;font-size:10px;line-height:12px;color:rgba(200,202,212,.62);white-space:nowrap">Go to Settings to activate Windows.</span>

</div></body></html>
